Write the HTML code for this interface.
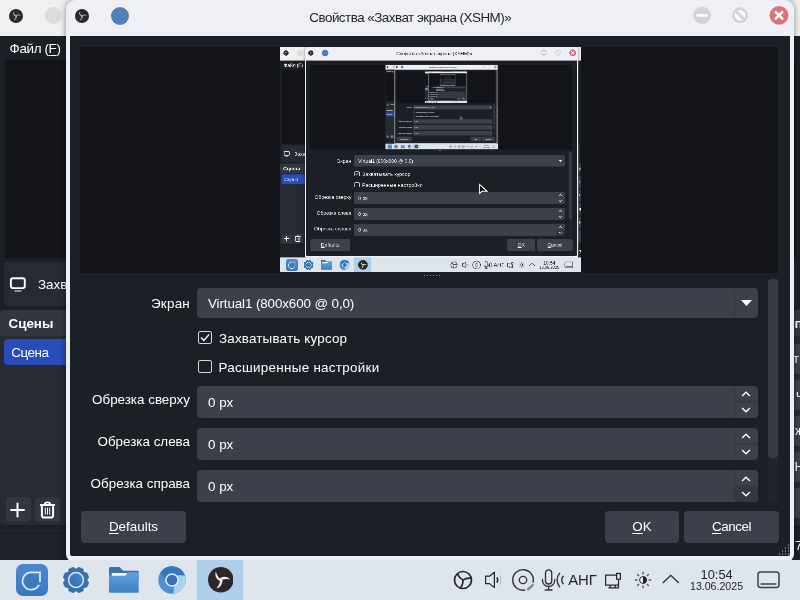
<!DOCTYPE html><html lang="ru"><head><meta charset="utf-8"><title>Свойства «Захват экрана (XSHM)»</title><style>
*{margin:0;padding:0;box-sizing:border-box}
html,body{width:800px;height:600px;overflow:hidden;background:#1d1f26}
body{font-family:"Liberation Sans",sans-serif;font-size:13.4px;color:#fefefe;line-height:16px}
.scr{will-change:transform;position:relative;width:800px;height:600px;overflow:hidden;background:#1d1f26}
.scr div,.scr span,.scr svg{position:absolute}
.scr span{white-space:nowrap}
.scr u{text-decoration:underline;text-underline-offset:2px}
.tb{left:0;top:0;width:800px;height:36px;background:#f0f0f1}
.menu{left:0;top:36px;width:800px;height:24px;background:#1d1f26}
.mprev{left:5px;top:60px;width:790px;height:198px;background:#13141a}
.srcbar{left:3.5px;top:261.7px;width:793px;height:44.3px;background:#272a33;border-radius:4px}
.dock{left:0;top:310px;width:70px;height:215px;background:#272a33;border-radius:4px}
.dockh{left:0;top:0;width:70px;height:26px;background:#32363f;border-radius:4px 4px 0 0}
.sel{left:4px;top:29px;width:66px;height:26px;background:#284cb8;border-radius:4px}
.sbtn{width:25px;height:25.2px;background:#32363f;border-radius:4px}
.status{left:0;top:530px;width:800px;height:30px;background:#1f2129;border-top:1px solid #23262e}
.rstrip{left:794px;top:310px;width:6px;height:215px;background:#272a33}
.dlg{left:66px;top:0;width:728.2px;height:562px;background:#eef0f5;border-radius:9px 9px 8px 8px;box-shadow:0 0 6px rgba(0,0,0,.45)}
.dlgin{left:4px;top:36px;width:720px;height:520px;background:#1d1f26;border-radius:0 0 2px 2px}
.pv{left:10.4px;top:11.2px;width:698px;height:225.6px;background:#13141a}
.pvi{left:199.6px;top:.3px;width:300.7px;height:225.5px;overflow:hidden;background:#1d1f26}
.sc{transform:scale(.3758);transform-origin:0 0;left:0;top:0}
.inp{background:#3c404b;border-radius:4px;height:31.8px;left:126.8px;width:561px}
.lbl{right:600px;text-align:right}
.btn{background:#3c404b;border-radius:4px;height:31.5px;top:475px;text-align:center;line-height:32px}
.cb{left:128px;width:14px;height:13px;border:1px solid #d8d8d8;border-radius:2px}
.task{left:0;top:560px;width:800px;height:40px;background:#dfe5ec}
.tray{color:#232629}
</style></head><body><div class="scr"><div class="tb"></div><svg style="left:9.10px;top:8.80px" width="14.00" height="14.00" viewBox="-12.5 -12.5 25 25"><circle r="12.5" fill="#2d2828"/><g><path d="M1.3,0.5 Q-3.0,-2.2 -5.0,-7.9 Q-6.8,-2.4 -1.0,1.5 Z" transform="rotate(0)" fill="#a8a8a8"/><path d="M1.3,0.5 Q-3.0,-2.2 -5.0,-7.9 Q-6.8,-2.4 -1.0,1.5 Z" transform="rotate(120)" fill="#a8a8a8"/><path d="M1.3,0.5 Q-3.0,-2.2 -5.0,-7.9 Q-6.8,-2.4 -1.0,1.5 Z" transform="rotate(240)" fill="#a8a8a8"/></g></svg><div style="left:44.9px;top:7.3px;width:17px;height:17px;border-radius:50%;background:#dcdcdc"></div><div class="menu"></div><span style="left:9.6px;top:41px;letter-spacing:-.35px">Файл (<u>F</u>)</span><div class="mprev"></div><div class="srcbar"></div><svg style="left:9px;top:276px" width="19" height="17" viewBox="0 0 19 17" ><rect x="1.9" y="2.3" width="13.9" height="9.8" rx="2" fill="none" stroke="#fefefe" stroke-width="1.9"/><path d="M5.4,15 H12.4" stroke="#d0d0d0" stroke-width="1.2"/></svg><span style="left:38px;top:277px">Захват экрана (XSHM)</span><div class="dock"><div class="dockh"></div><span style="left:8.5px;top:5.5px;font-weight:bold">Сцены</span><div class="sel"></div><span style="left:11.2px;top:34.5px;letter-spacing:-.4px">Сцена</span><div class="sbtn" style="left:5.5px;top:186.6px"></div><div class="sbtn" style="left:35px;top:186.6px"></div><svg style="left:5.5px;top:186.6px" width="25" height="25" viewBox="0 0 25 25" ><path d="M11.5,5.8 V20.2 M4.3,13 H18.7" stroke="#fefefe" stroke-width="2"/></svg><svg style="left:35px;top:186.6px" width="25" height="25" viewBox="0 0 25 25" ><path d="M5,8 H20 M9.8,7.4 Q9.8,5.4 12.5,5.4 Q15.2,5.4 15.2,7.4" fill="none" stroke="#fefefe" stroke-width="1.9"/><path d="M6.9,9 V18.2 Q6.9,20.6 9.3,20.6 H15.7 Q18.1,20.6 18.1,18.2 V9" fill="none" stroke="#fefefe" stroke-width="2"/><path d="M10.3,10.6 V17.6 M12.5,10.6 V17.6 M14.7,10.6 V17.6" stroke="#fefefe" stroke-width="1"/></svg></div><div class="status"></div><div class="rstrip"></div><div style="left:794px;top:344.0px;width:6px;height:30px;background:#3c404b"></div><div style="left:794px;top:380.0px;width:6px;height:30px;background:#3c404b"></div><div style="left:794px;top:416.0px;width:6px;height:30px;background:#3c404b"></div><div style="left:794px;top:452.0px;width:6px;height:30px;background:#3c404b"></div><div style="left:794px;top:488.0px;width:6px;height:30px;background:#3c404b"></div><div style="left:794px;top:310px;width:6px;height:26px;background:#32363f"></div><span style="left:794.5px;top:315.5px;font-weight:bold">п</span><span style="left:793px;top:351px">ть</span><span style="left:796px;top:387px">ч</span><span style="left:795px;top:423px">ж</span><span style="left:794.5px;top:459px">На</span><span style="left:795px;top:538px">7</span><div class="dlg"><svg style="left:8.90px;top:8.80px" width="14.00" height="14.00" viewBox="-12.5 -12.5 25 25"><circle r="12.5" fill="#2d2828"/><g><path d="M1.3,0.5 Q-3.0,-2.2 -5.0,-7.9 Q-6.8,-2.4 -1.0,1.5 Z" transform="rotate(0)" fill="#a8a8a8"/><path d="M1.3,0.5 Q-3.0,-2.2 -5.0,-7.9 Q-6.8,-2.4 -1.0,1.5 Z" transform="rotate(120)" fill="#a8a8a8"/><path d="M1.3,0.5 Q-3.0,-2.2 -5.0,-7.9 Q-6.8,-2.4 -1.0,1.5 Z" transform="rotate(240)" fill="#a8a8a8"/></g></svg><div style="left:44.8px;top:6.7px;width:18.2px;height:18.2px;border-radius:50%;background:#4f7fb9"></div><span style="left:243.3px;top:10.2px;color:#232629;font-size:13.4px;letter-spacing:-.5px">Свойства «Захват экрана (XSHM)»</span><svg style="left:627px;top:6px" width="18" height="18" viewBox="0 0 18 18" ><circle cx="9" cy="9.3" r="8.7" fill="#d3d4d5"/><path d="M3.3,9.4 H14.7" stroke="#fff" stroke-width="2.6"/></svg><svg style="left:665px;top:6px" width="18" height="18" viewBox="0 0 18 18" ><circle cx="9" cy="9.3" r="6.7" fill="#fafafa" stroke="#d3d4d5" stroke-width="2.6"/><path d="M4.2,4.6 L13.8,14" stroke="#d3d4d5" stroke-width="2.8"/></svg><svg style="left:702.5px;top:5px" width="20" height="20" viewBox="0 0 20 20" ><circle cx="10" cy="10.3" r="9.4" fill="#da7380"/><path d="M6,6.3 L14,14.3 M14,6.3 L6,14.3" stroke="#fff" stroke-width="2.5"/></svg><div class="dlgin"><div class="pv"><div class="pvi"><div class="scr sc"><div class="tb"></div><svg style="left:9.10px;top:8.80px" width="14.00" height="14.00" viewBox="-12.5 -12.5 25 25"><circle r="12.5" fill="#2d2828"/><g><path d="M1.3,0.5 Q-3.0,-2.2 -5.0,-7.9 Q-6.8,-2.4 -1.0,1.5 Z" transform="rotate(0)" fill="#a8a8a8"/><path d="M1.3,0.5 Q-3.0,-2.2 -5.0,-7.9 Q-6.8,-2.4 -1.0,1.5 Z" transform="rotate(120)" fill="#a8a8a8"/><path d="M1.3,0.5 Q-3.0,-2.2 -5.0,-7.9 Q-6.8,-2.4 -1.0,1.5 Z" transform="rotate(240)" fill="#a8a8a8"/></g></svg><div style="left:44.9px;top:7.3px;width:17px;height:17px;border-radius:50%;background:#dcdcdc"></div><div class="menu"></div><span style="left:9.6px;top:41px;letter-spacing:-.35px">Файл (<u>F</u>)</span><div class="mprev"></div><div class="srcbar"></div><svg style="left:9px;top:276px" width="19" height="17" viewBox="0 0 19 17" ><rect x="1.9" y="2.3" width="13.9" height="9.8" rx="2" fill="none" stroke="#fefefe" stroke-width="1.9"/><path d="M5.4,15 H12.4" stroke="#d0d0d0" stroke-width="1.2"/></svg><span style="left:38px;top:277px">Захват экрана (XSHM)</span><div class="dock"><div class="dockh"></div><span style="left:8.5px;top:5.5px;font-weight:bold">Сцены</span><div class="sel"></div><span style="left:11.2px;top:34.5px;letter-spacing:-.4px">Сцена</span><div class="sbtn" style="left:5.5px;top:186.6px"></div><div class="sbtn" style="left:35px;top:186.6px"></div><svg style="left:5.5px;top:186.6px" width="25" height="25" viewBox="0 0 25 25" ><path d="M11.5,5.8 V20.2 M4.3,13 H18.7" stroke="#fefefe" stroke-width="2"/></svg><svg style="left:35px;top:186.6px" width="25" height="25" viewBox="0 0 25 25" ><path d="M5,8 H20 M9.8,7.4 Q9.8,5.4 12.5,5.4 Q15.2,5.4 15.2,7.4" fill="none" stroke="#fefefe" stroke-width="1.9"/><path d="M6.9,9 V18.2 Q6.9,20.6 9.3,20.6 H15.7 Q18.1,20.6 18.1,18.2 V9" fill="none" stroke="#fefefe" stroke-width="2"/><path d="M10.3,10.6 V17.6 M12.5,10.6 V17.6 M14.7,10.6 V17.6" stroke="#fefefe" stroke-width="1"/></svg></div><div class="status"></div><div class="rstrip"></div><div style="left:794px;top:344.0px;width:6px;height:30px;background:#3c404b"></div><div style="left:794px;top:380.0px;width:6px;height:30px;background:#3c404b"></div><div style="left:794px;top:416.0px;width:6px;height:30px;background:#3c404b"></div><div style="left:794px;top:452.0px;width:6px;height:30px;background:#3c404b"></div><div style="left:794px;top:488.0px;width:6px;height:30px;background:#3c404b"></div><div style="left:794px;top:310px;width:6px;height:26px;background:#32363f"></div><span style="left:794.5px;top:315.5px;font-weight:bold">п</span><span style="left:793px;top:351px">ть</span><span style="left:796px;top:387px">ч</span><span style="left:795px;top:423px">ж</span><span style="left:794.5px;top:459px">На</span><span style="left:795px;top:538px">7</span><div class="dlg"><svg style="left:8.90px;top:8.80px" width="14.00" height="14.00" viewBox="-12.5 -12.5 25 25"><circle r="12.5" fill="#2d2828"/><g><path d="M1.3,0.5 Q-3.0,-2.2 -5.0,-7.9 Q-6.8,-2.4 -1.0,1.5 Z" transform="rotate(0)" fill="#a8a8a8"/><path d="M1.3,0.5 Q-3.0,-2.2 -5.0,-7.9 Q-6.8,-2.4 -1.0,1.5 Z" transform="rotate(120)" fill="#a8a8a8"/><path d="M1.3,0.5 Q-3.0,-2.2 -5.0,-7.9 Q-6.8,-2.4 -1.0,1.5 Z" transform="rotate(240)" fill="#a8a8a8"/></g></svg><div style="left:44.8px;top:6.7px;width:18.2px;height:18.2px;border-radius:50%;background:#4f7fb9"></div><span style="left:243.3px;top:10.2px;color:#232629;font-size:13.4px;letter-spacing:-.5px">Свойства «Захват экрана (XSHM)»</span><svg style="left:627px;top:6px" width="18" height="18" viewBox="0 0 18 18" ><circle cx="9" cy="9.3" r="8.7" fill="#d3d4d5"/><path d="M3.3,9.4 H14.7" stroke="#fff" stroke-width="2.6"/></svg><svg style="left:665px;top:6px" width="18" height="18" viewBox="0 0 18 18" ><circle cx="9" cy="9.3" r="6.7" fill="#fafafa" stroke="#d3d4d5" stroke-width="2.6"/><path d="M4.2,4.6 L13.8,14" stroke="#d3d4d5" stroke-width="2.8"/></svg><svg style="left:702.5px;top:5px" width="20" height="20" viewBox="0 0 20 20" ><circle cx="10" cy="10.3" r="9.4" fill="#da7380"/><path d="M6,6.3 L14,14.3 M14,6.3 L6,14.3" stroke="#fff" stroke-width="2.5"/></svg><div class="dlgin"><div class="pv"><div class="pvi"><div class="scr sc"><div class="tb"></div><svg style="left:9.10px;top:8.80px" width="14.00" height="14.00" viewBox="-12.5 -12.5 25 25"><circle r="12.5" fill="#2d2828"/><g><path d="M1.3,0.5 Q-3.0,-2.2 -5.0,-7.9 Q-6.8,-2.4 -1.0,1.5 Z" transform="rotate(0)" fill="#a8a8a8"/><path d="M1.3,0.5 Q-3.0,-2.2 -5.0,-7.9 Q-6.8,-2.4 -1.0,1.5 Z" transform="rotate(120)" fill="#a8a8a8"/><path d="M1.3,0.5 Q-3.0,-2.2 -5.0,-7.9 Q-6.8,-2.4 -1.0,1.5 Z" transform="rotate(240)" fill="#a8a8a8"/></g></svg><div style="left:44.9px;top:7.3px;width:17px;height:17px;border-radius:50%;background:#dcdcdc"></div><div class="menu"></div><span style="left:9.6px;top:41px;letter-spacing:-.35px">Файл (<u>F</u>)</span><div class="mprev"></div><div class="srcbar"></div><svg style="left:9px;top:276px" width="19" height="17" viewBox="0 0 19 17" ><rect x="1.9" y="2.3" width="13.9" height="9.8" rx="2" fill="none" stroke="#fefefe" stroke-width="1.9"/><path d="M5.4,15 H12.4" stroke="#d0d0d0" stroke-width="1.2"/></svg><span style="left:38px;top:277px">Захват экрана (XSHM)</span><div class="dock"><div class="dockh"></div><span style="left:8.5px;top:5.5px;font-weight:bold">Сцены</span><div class="sel"></div><span style="left:11.2px;top:34.5px;letter-spacing:-.4px">Сцена</span><div class="sbtn" style="left:5.5px;top:186.6px"></div><div class="sbtn" style="left:35px;top:186.6px"></div><svg style="left:5.5px;top:186.6px" width="25" height="25" viewBox="0 0 25 25" ><path d="M11.5,5.8 V20.2 M4.3,13 H18.7" stroke="#fefefe" stroke-width="2"/></svg><svg style="left:35px;top:186.6px" width="25" height="25" viewBox="0 0 25 25" ><path d="M5,8 H20 M9.8,7.4 Q9.8,5.4 12.5,5.4 Q15.2,5.4 15.2,7.4" fill="none" stroke="#fefefe" stroke-width="1.9"/><path d="M6.9,9 V18.2 Q6.9,20.6 9.3,20.6 H15.7 Q18.1,20.6 18.1,18.2 V9" fill="none" stroke="#fefefe" stroke-width="2"/><path d="M10.3,10.6 V17.6 M12.5,10.6 V17.6 M14.7,10.6 V17.6" stroke="#fefefe" stroke-width="1"/></svg></div><div class="status"></div><div class="rstrip"></div><div style="left:794px;top:344.0px;width:6px;height:30px;background:#3c404b"></div><div style="left:794px;top:380.0px;width:6px;height:30px;background:#3c404b"></div><div style="left:794px;top:416.0px;width:6px;height:30px;background:#3c404b"></div><div style="left:794px;top:452.0px;width:6px;height:30px;background:#3c404b"></div><div style="left:794px;top:488.0px;width:6px;height:30px;background:#3c404b"></div><div style="left:794px;top:310px;width:6px;height:26px;background:#32363f"></div><span style="left:794.5px;top:315.5px;font-weight:bold">п</span><span style="left:793px;top:351px">ть</span><span style="left:796px;top:387px">ч</span><span style="left:795px;top:423px">ж</span><span style="left:794.5px;top:459px">На</span><span style="left:795px;top:538px">7</span><div class="dlg"><svg style="left:8.90px;top:8.80px" width="14.00" height="14.00" viewBox="-12.5 -12.5 25 25"><circle r="12.5" fill="#2d2828"/><g><path d="M1.3,0.5 Q-3.0,-2.2 -5.0,-7.9 Q-6.8,-2.4 -1.0,1.5 Z" transform="rotate(0)" fill="#a8a8a8"/><path d="M1.3,0.5 Q-3.0,-2.2 -5.0,-7.9 Q-6.8,-2.4 -1.0,1.5 Z" transform="rotate(120)" fill="#a8a8a8"/><path d="M1.3,0.5 Q-3.0,-2.2 -5.0,-7.9 Q-6.8,-2.4 -1.0,1.5 Z" transform="rotate(240)" fill="#a8a8a8"/></g></svg><div style="left:44.8px;top:6.7px;width:18.2px;height:18.2px;border-radius:50%;background:#4f7fb9"></div><span style="left:243.3px;top:10.2px;color:#232629;font-size:13.4px;letter-spacing:-.5px">Свойства «Захват экрана (XSHM)»</span><svg style="left:627px;top:6px" width="18" height="18" viewBox="0 0 18 18" ><circle cx="9" cy="9.3" r="8.7" fill="#d3d4d5"/><path d="M3.3,9.4 H14.7" stroke="#fff" stroke-width="2.6"/></svg><svg style="left:665px;top:6px" width="18" height="18" viewBox="0 0 18 18" ><circle cx="9" cy="9.3" r="6.7" fill="#fafafa" stroke="#d3d4d5" stroke-width="2.6"/><path d="M4.2,4.6 L13.8,14" stroke="#d3d4d5" stroke-width="2.8"/></svg><svg style="left:702.5px;top:5px" width="20" height="20" viewBox="0 0 20 20" ><circle cx="10" cy="10.3" r="9.4" fill="#da7380"/><path d="M6,6.3 L14,14.3 M14,6.3 L6,14.3" stroke="#fff" stroke-width="2.5"/></svg><div class="dlgin"><div class="pv"><div class="pvi"><div class="scr sc"><div class="tb"></div><svg style="left:9.10px;top:8.80px" width="14.00" height="14.00" viewBox="-12.5 -12.5 25 25"><circle r="12.5" fill="#2d2828"/><g><path d="M1.3,0.5 Q-3.0,-2.2 -5.0,-7.9 Q-6.8,-2.4 -1.0,1.5 Z" transform="rotate(0)" fill="#a8a8a8"/><path d="M1.3,0.5 Q-3.0,-2.2 -5.0,-7.9 Q-6.8,-2.4 -1.0,1.5 Z" transform="rotate(120)" fill="#a8a8a8"/><path d="M1.3,0.5 Q-3.0,-2.2 -5.0,-7.9 Q-6.8,-2.4 -1.0,1.5 Z" transform="rotate(240)" fill="#a8a8a8"/></g></svg><div style="left:44.9px;top:7.3px;width:17px;height:17px;border-radius:50%;background:#dcdcdc"></div><div class="menu"></div><span style="left:9.6px;top:41px;letter-spacing:-.35px">Файл (<u>F</u>)</span><div class="mprev"></div><div class="srcbar"></div><svg style="left:9px;top:276px" width="19" height="17" viewBox="0 0 19 17" ><rect x="1.9" y="2.3" width="13.9" height="9.8" rx="2" fill="none" stroke="#fefefe" stroke-width="1.9"/><path d="M5.4,15 H12.4" stroke="#d0d0d0" stroke-width="1.2"/></svg><span style="left:38px;top:277px">Захват экрана (XSHM)</span><div class="dock"><div class="dockh"></div><span style="left:8.5px;top:5.5px;font-weight:bold">Сцены</span><div class="sel"></div><span style="left:11.2px;top:34.5px;letter-spacing:-.4px">Сцена</span><div class="sbtn" style="left:5.5px;top:186.6px"></div><div class="sbtn" style="left:35px;top:186.6px"></div><svg style="left:5.5px;top:186.6px" width="25" height="25" viewBox="0 0 25 25" ><path d="M11.5,5.8 V20.2 M4.3,13 H18.7" stroke="#fefefe" stroke-width="2"/></svg><svg style="left:35px;top:186.6px" width="25" height="25" viewBox="0 0 25 25" ><path d="M5,8 H20 M9.8,7.4 Q9.8,5.4 12.5,5.4 Q15.2,5.4 15.2,7.4" fill="none" stroke="#fefefe" stroke-width="1.9"/><path d="M6.9,9 V18.2 Q6.9,20.6 9.3,20.6 H15.7 Q18.1,20.6 18.1,18.2 V9" fill="none" stroke="#fefefe" stroke-width="2"/><path d="M10.3,10.6 V17.6 M12.5,10.6 V17.6 M14.7,10.6 V17.6" stroke="#fefefe" stroke-width="1"/></svg></div><div class="status"></div><div class="rstrip"></div><div style="left:794px;top:344.0px;width:6px;height:30px;background:#3c404b"></div><div style="left:794px;top:380.0px;width:6px;height:30px;background:#3c404b"></div><div style="left:794px;top:416.0px;width:6px;height:30px;background:#3c404b"></div><div style="left:794px;top:452.0px;width:6px;height:30px;background:#3c404b"></div><div style="left:794px;top:488.0px;width:6px;height:30px;background:#3c404b"></div><div style="left:794px;top:310px;width:6px;height:26px;background:#32363f"></div><span style="left:794.5px;top:315.5px;font-weight:bold">п</span><span style="left:793px;top:351px">ть</span><span style="left:796px;top:387px">ч</span><span style="left:795px;top:423px">ж</span><span style="left:794.5px;top:459px">На</span><span style="left:795px;top:538px">7</span><div class="dlg"><svg style="left:8.90px;top:8.80px" width="14.00" height="14.00" viewBox="-12.5 -12.5 25 25"><circle r="12.5" fill="#2d2828"/><g><path d="M1.3,0.5 Q-3.0,-2.2 -5.0,-7.9 Q-6.8,-2.4 -1.0,1.5 Z" transform="rotate(0)" fill="#a8a8a8"/><path d="M1.3,0.5 Q-3.0,-2.2 -5.0,-7.9 Q-6.8,-2.4 -1.0,1.5 Z" transform="rotate(120)" fill="#a8a8a8"/><path d="M1.3,0.5 Q-3.0,-2.2 -5.0,-7.9 Q-6.8,-2.4 -1.0,1.5 Z" transform="rotate(240)" fill="#a8a8a8"/></g></svg><div style="left:44.8px;top:6.7px;width:18.2px;height:18.2px;border-radius:50%;background:#4f7fb9"></div><span style="left:243.3px;top:10.2px;color:#232629;font-size:13.4px;letter-spacing:-.5px">Свойства «Захват экрана (XSHM)»</span><svg style="left:627px;top:6px" width="18" height="18" viewBox="0 0 18 18" ><circle cx="9" cy="9.3" r="8.7" fill="#d3d4d5"/><path d="M3.3,9.4 H14.7" stroke="#fff" stroke-width="2.6"/></svg><svg style="left:665px;top:6px" width="18" height="18" viewBox="0 0 18 18" ><circle cx="9" cy="9.3" r="6.7" fill="#fafafa" stroke="#d3d4d5" stroke-width="2.6"/><path d="M4.2,4.6 L13.8,14" stroke="#d3d4d5" stroke-width="2.8"/></svg><svg style="left:702.5px;top:5px" width="20" height="20" viewBox="0 0 20 20" ><circle cx="10" cy="10.3" r="9.4" fill="#da7380"/><path d="M6,6.3 L14,14.3 M14,6.3 L6,14.3" stroke="#fff" stroke-width="2.5"/></svg><div class="dlgin"><div class="pv"><div class="pvi"><div class="scr sc"><div class="tb"></div><svg style="left:9.10px;top:8.80px" width="14.00" height="14.00" viewBox="-12.5 -12.5 25 25"><circle r="12.5" fill="#2d2828"/><g><path d="M1.3,0.5 Q-3.0,-2.2 -5.0,-7.9 Q-6.8,-2.4 -1.0,1.5 Z" transform="rotate(0)" fill="#a8a8a8"/><path d="M1.3,0.5 Q-3.0,-2.2 -5.0,-7.9 Q-6.8,-2.4 -1.0,1.5 Z" transform="rotate(120)" fill="#a8a8a8"/><path d="M1.3,0.5 Q-3.0,-2.2 -5.0,-7.9 Q-6.8,-2.4 -1.0,1.5 Z" transform="rotate(240)" fill="#a8a8a8"/></g></svg><div style="left:44.9px;top:7.3px;width:17px;height:17px;border-radius:50%;background:#dcdcdc"></div><div class="menu"></div><span style="left:9.6px;top:41px;letter-spacing:-.35px">Файл (<u>F</u>)</span><div class="mprev"></div><div class="srcbar"></div><svg style="left:9px;top:276px" width="19" height="17" viewBox="0 0 19 17" ><rect x="1.9" y="2.3" width="13.9" height="9.8" rx="2" fill="none" stroke="#fefefe" stroke-width="1.9"/><path d="M5.4,15 H12.4" stroke="#d0d0d0" stroke-width="1.2"/></svg><span style="left:38px;top:277px">Захват экрана (XSHM)</span><div class="dock"><div class="dockh"></div><span style="left:8.5px;top:5.5px;font-weight:bold">Сцены</span><div class="sel"></div><span style="left:11.2px;top:34.5px;letter-spacing:-.4px">Сцена</span><div class="sbtn" style="left:5.5px;top:186.6px"></div><div class="sbtn" style="left:35px;top:186.6px"></div><svg style="left:5.5px;top:186.6px" width="25" height="25" viewBox="0 0 25 25" ><path d="M11.5,5.8 V20.2 M4.3,13 H18.7" stroke="#fefefe" stroke-width="2"/></svg><svg style="left:35px;top:186.6px" width="25" height="25" viewBox="0 0 25 25" ><path d="M5,8 H20 M9.8,7.4 Q9.8,5.4 12.5,5.4 Q15.2,5.4 15.2,7.4" fill="none" stroke="#fefefe" stroke-width="1.9"/><path d="M6.9,9 V18.2 Q6.9,20.6 9.3,20.6 H15.7 Q18.1,20.6 18.1,18.2 V9" fill="none" stroke="#fefefe" stroke-width="2"/><path d="M10.3,10.6 V17.6 M12.5,10.6 V17.6 M14.7,10.6 V17.6" stroke="#fefefe" stroke-width="1"/></svg></div><div class="status"></div><div class="rstrip"></div><div style="left:794px;top:344.0px;width:6px;height:30px;background:#3c404b"></div><div style="left:794px;top:380.0px;width:6px;height:30px;background:#3c404b"></div><div style="left:794px;top:416.0px;width:6px;height:30px;background:#3c404b"></div><div style="left:794px;top:452.0px;width:6px;height:30px;background:#3c404b"></div><div style="left:794px;top:488.0px;width:6px;height:30px;background:#3c404b"></div><div style="left:794px;top:310px;width:6px;height:26px;background:#32363f"></div><span style="left:794.5px;top:315.5px;font-weight:bold">п</span><span style="left:793px;top:351px">ть</span><span style="left:796px;top:387px">ч</span><span style="left:795px;top:423px">ж</span><span style="left:794.5px;top:459px">На</span><span style="left:795px;top:538px">7</span><div class="dlg"><svg style="left:8.90px;top:8.80px" width="14.00" height="14.00" viewBox="-12.5 -12.5 25 25"><circle r="12.5" fill="#2d2828"/><g><path d="M1.3,0.5 Q-3.0,-2.2 -5.0,-7.9 Q-6.8,-2.4 -1.0,1.5 Z" transform="rotate(0)" fill="#a8a8a8"/><path d="M1.3,0.5 Q-3.0,-2.2 -5.0,-7.9 Q-6.8,-2.4 -1.0,1.5 Z" transform="rotate(120)" fill="#a8a8a8"/><path d="M1.3,0.5 Q-3.0,-2.2 -5.0,-7.9 Q-6.8,-2.4 -1.0,1.5 Z" transform="rotate(240)" fill="#a8a8a8"/></g></svg><div style="left:44.8px;top:6.7px;width:18.2px;height:18.2px;border-radius:50%;background:#4f7fb9"></div><span style="left:243.3px;top:10.2px;color:#232629;font-size:13.4px;letter-spacing:-.5px">Свойства «Захват экрана (XSHM)»</span><svg style="left:627px;top:6px" width="18" height="18" viewBox="0 0 18 18" ><circle cx="9" cy="9.3" r="8.7" fill="#d3d4d5"/><path d="M3.3,9.4 H14.7" stroke="#fff" stroke-width="2.6"/></svg><svg style="left:665px;top:6px" width="18" height="18" viewBox="0 0 18 18" ><circle cx="9" cy="9.3" r="6.7" fill="#fafafa" stroke="#d3d4d5" stroke-width="2.6"/><path d="M4.2,4.6 L13.8,14" stroke="#d3d4d5" stroke-width="2.8"/></svg><svg style="left:702.5px;top:5px" width="20" height="20" viewBox="0 0 20 20" ><circle cx="10" cy="10.3" r="9.4" fill="#da7380"/><path d="M6,6.3 L14,14.3 M14,6.3 L6,14.3" stroke="#fff" stroke-width="2.5"/></svg><div class="dlgin"><div class="pv"><div class="pvi"></div></div><div style="left:354px;top:238.5px;width:1.4px;height:1.4px;background:#8a8e98"></div><div style="left:357px;top:238.5px;width:1.4px;height:1.4px;background:#8a8e98"></div><div style="left:360px;top:238.5px;width:1.4px;height:1.4px;background:#8a8e98"></div><div style="left:363px;top:238.5px;width:1.4px;height:1.4px;background:#8a8e98"></div><div style="left:366px;top:238.5px;width:1.4px;height:1.4px;background:#8a8e98"></div><div style="left:369px;top:238.5px;width:1.4px;height:1.4px;background:#8a8e98"></div><div style="left:698px;top:243px;width:10px;height:223.5px;background:#22252d;border-radius:4px"></div><div style="left:698px;top:243px;width:10px;height:178.5px;background:#373b46;border-radius:4px"></div><span class="lbl" style="top:259.5px;letter-spacing:.25px">Экран</span><div class="inp" style="top:252px;height:30px"></div><span style="left:138px;top:259.5px;letter-spacing:-.11px">Virtual1 (800x600 @ 0,0)</span><div style="left:663.5px;top:253px;width:1px;height:28px;background:#32363f"></div><svg style="left:671px;top:264.3px" width="11" height="6" viewBox="0 0 11 6" ><path d="M0,0 H11 L5.5,6 Z" fill="#fefefe"/></svg><div class="cb" style="top:295px"></div><svg style="left:128px;top:295px" width="14" height="13" viewBox="0 0 14 13" ><path d="M3,6.6 L5.8,9.4 L11.2,3.4" fill="none" stroke="#fefefe" stroke-width="1.4"/></svg><span style="left:149px;top:294.7px;letter-spacing:.19px">Захватывать курсор</span><div class="cb" style="top:324px"></div><span style="left:148.5px;top:323.7px;letter-spacing:.3px">Расширенные настройки</span><span class="lbl" style="top:355.9px">Обрезка сверху</span><div class="inp" style="top:349.9px"></div><span style="left:138px;top:358.7px">0 px</span><div style="left:663.5px;top:350.9px;width:1px;height:29.8px;background:#32363f"></div><div style="left:664.5px;top:365.3px;width:23px;height:1px;background:#32363f"></div><svg style="left:671px;top:355.3px" width="10" height="6" viewBox="0 0 10 6" ><path d="M1.1,4.9 L5,1.2 L8.9,4.9" fill="none" stroke="#fefefe" stroke-width="1.4"/></svg><svg style="left:671px;top:370.8px" width="10" height="6" viewBox="0 0 10 6" ><path d="M1.1,1.1 L5,4.8 L8.9,1.1" fill="none" stroke="#fefefe" stroke-width="1.4"/></svg><span class="lbl" style="top:398.0px">Обрезка слева</span><div class="inp" style="top:392.0px"></div><span style="left:138px;top:400.8px">0 px</span><div style="left:663.5px;top:393.0px;width:1px;height:29.8px;background:#32363f"></div><div style="left:664.5px;top:407.4px;width:23px;height:1px;background:#32363f"></div><svg style="left:671px;top:397.4px" width="10" height="6" viewBox="0 0 10 6" ><path d="M1.1,4.9 L5,1.2 L8.9,4.9" fill="none" stroke="#fefefe" stroke-width="1.4"/></svg><svg style="left:671px;top:412.9px" width="10" height="6" viewBox="0 0 10 6" ><path d="M1.1,1.1 L5,4.8 L8.9,1.1" fill="none" stroke="#fefefe" stroke-width="1.4"/></svg><span class="lbl" style="top:440.1px">Обрезка справа</span><div class="inp" style="top:434.1px"></div><span style="left:138px;top:442.9px">0 px</span><div style="left:663.5px;top:435.1px;width:1px;height:29.8px;background:#32363f"></div><div style="left:664.5px;top:449.5px;width:23px;height:1px;background:#32363f"></div><div style="left:664.5px;top:450.5px;width:23.3px;height:15.4px;background:#343842;border-radius:0 0 4px 0"></div><svg style="left:671px;top:439.5px" width="10" height="6" viewBox="0 0 10 6" ><path d="M1.1,4.9 L5,1.2 L8.9,4.9" fill="none" stroke="#fefefe" stroke-width="1.4"/></svg><svg style="left:671px;top:455.0px" width="10" height="6" viewBox="0 0 10 6" ><path d="M1.1,1.1 L5,4.8 L8.9,1.1" fill="none" stroke="#fefefe" stroke-width="1.4"/></svg><div class="btn" style="left:11px;width:105px"><u>D</u>efaults</div><div class="btn" style="left:535px;width:74px"><u>O</u>K</div><div class="btn" style="left:614px;width:95px"><span style="position:static;letter-spacing:-.45px"><u>C</u>ancel</span></div><div style="left:717.5px;top:508px;width:1.6px;height:1.6px;background:#6f7480"></div><div style="left:714.5px;top:511px;width:1.6px;height:1.6px;background:#6f7480"></div><div style="left:717.5px;top:511px;width:1.6px;height:1.6px;background:#6f7480"></div><div style="left:711.5px;top:514px;width:1.6px;height:1.6px;background:#6f7480"></div><div style="left:714.5px;top:514px;width:1.6px;height:1.6px;background:#6f7480"></div><div style="left:717.5px;top:514px;width:1.6px;height:1.6px;background:#6f7480"></div><div style="left:708.5px;top:517px;width:1.6px;height:1.6px;background:#6f7480"></div><div style="left:711.5px;top:517px;width:1.6px;height:1.6px;background:#6f7480"></div><div style="left:714.5px;top:517px;width:1.6px;height:1.6px;background:#6f7480"></div><div style="left:717.5px;top:517px;width:1.6px;height:1.6px;background:#6f7480"></div></div></div><div class="task"></div><div style="left:197px;top:560px;width:46px;height:40px;background:#afceea"></div><div style="left:194.5px;top:560px;width:2.5px;height:40px;background:#d6e6f2"></div><div style="left:243px;top:560px;width:3px;height:40px;background:#d6e6f2"></div><svg style="left:16px;top:564px" width="32" height="32" viewBox="0 0 32 32" ><defs><linearGradient id="gA" x1="0" y1="0" x2="0" y2="1"><stop offset="0" stop-color="#4c89cf"/><stop offset="1" stop-color="#3c78c0"/></linearGradient></defs><rect x="0" y="0" width="32" height="32" rx="7" fill="url(#gA)"/><circle cx="15.3" cy="16.7" r="6.6" fill="#3a73b8" opacity=".5"/><path d="M23,20.9 A8.7,8.7 0 1 1 14.2,8.3 H24 V18" fill="none" stroke="#dbeeff" stroke-width="1.7" stroke-linejoin="miter"/></svg><svg style="left:60px;top:563.7px" width="32" height="32" viewBox="-16 -16 32 32"><defs><linearGradient id="gG" x1="1" y1="0" x2="0" y2="1"><stop offset="0" stop-color="#3f8ae0"/><stop offset="1" stop-color="#3a68a4"/></linearGradient></defs><circle r="13.2" fill="#3d70a8"/><circle cx="13.60" cy="0.00" r="2.1" fill="#e3eef9"/><circle cx="9.62" cy="9.62" r="2.1" fill="#e3eef9"/><circle cx="0.00" cy="13.60" r="2.1" fill="#e3eef9"/><circle cx="-9.62" cy="9.62" r="2.1" fill="#e3eef9"/><circle cx="-13.60" cy="0.00" r="2.1" fill="#e3eef9"/><circle cx="-9.62" cy="-9.62" r="2.1" fill="#e3eef9"/><circle cx="-0.00" cy="-13.60" r="2.1" fill="#e3eef9"/><circle cx="9.62" cy="-9.62" r="2.1" fill="#e3eef9"/><circle r="7.4" fill="url(#gG)" stroke="#d4ecff" stroke-width="1.5"/></svg><svg style="left:109px;top:567px" width="30" height="26" viewBox="0 0 30 26" ><defs><linearGradient id="gF" x1="0" y1="0" x2="0" y2="1"><stop offset="0" stop-color="#62a1dc"/><stop offset="1" stop-color="#3f80c4"/></linearGradient></defs><path d="M0,1.2 Q0,0 1.2,0 H10.6 L14.4,3.8 H28.6 Q29.7,3.8 29.7,5 V12 H0 Z" fill="#3c72ad"/><rect x="2.7" y="6" width="16" height="3.4" fill="#f4f8fc"/><path d="M0,8.7 H16.2 L18.8,5.3 H29.7 V24.5 Q29.7,25.7 28.5,25.7 H1.2 Q0,25.7 0,24.5 Z" fill="url(#gF)"/></svg><svg style="left:156px;top:563.7px" width="32" height="32" viewBox="-16 -16 32 32"><defs><linearGradient id="gC" x1="0" y1="0" x2="1" y2="1"><stop offset="0" stop-color="#8cc3ea"/><stop offset="1" stop-color="#bfe2f3"/></linearGradient></defs><circle r="13.7" fill="#4f8ed0"/><path d="M-2,1 Q-9,-4 -11.86,-6.85 A13.7,13.7 0 0 1 13.03,-4.23 L5.5,-5 Z" fill="#3777bb"/><path d="M5.5,-5 L13.03,-4.23 A13.7,13.7 0 0 1 1.43,13.62 L2,6 Z" fill="url(#gC)"/><circle r="6.1" fill="#3a72b4" stroke="#dcf0ff" stroke-width="1.5"/></svg><svg style="left:207.50px;top:567.10px" width="25.60" height="25.60" viewBox="-12.5 -12.5 25 25"><circle r="12.5" fill="#2d2828"/><g><path d="M1.3,0.5 Q-3.0,-2.2 -5.0,-7.9 Q-6.8,-2.4 -1.0,1.5 Z" transform="rotate(0)" fill="#ececec"/><path d="M1.3,0.5 Q-3.0,-2.2 -5.0,-7.9 Q-6.8,-2.4 -1.0,1.5 Z" transform="rotate(120)" fill="#ececec"/><path d="M1.3,0.5 Q-3.0,-2.2 -5.0,-7.9 Q-6.8,-2.4 -1.0,1.5 Z" transform="rotate(240)" fill="#ececec"/></g></svg><svg style="left:453px;top:569.6px" width="20" height="20" viewBox="-10 -10 20 20"><g fill="none" stroke="#232629" stroke-width="1.6" stroke-linecap="butt"><circle r="8.5" stroke-width="1.7"/><path d="M0.2,0.1 Q-3.9,-1.9 -5.6,-6.1" transform="rotate(0)"/><path d="M0.2,0.1 Q-3.9,-1.9 -5.6,-6.1" transform="rotate(120)"/><path d="M0.2,0.1 Q-3.9,-1.9 -5.6,-6.1" transform="rotate(240)"/></g></svg><svg style="left:484px;top:570px" width="20" height="20" viewBox="0 0 20 20" ><g fill="none" stroke="#232629" stroke-width="1.2" stroke-linejoin="round"><path d="M1.6,6.2 H5.6 L10.4,2.2 V17.6 L5.6,13.6 H1.6 Z"/><path d="M12.9,7.3 Q14.6,10 12.9,12.7" stroke-width="1.5"/><path d="M15.6,5.2 Q18.6,10 15.6,14.8" stroke="#b9bec4" stroke-width="1.1"/></g></svg><svg style="left:511px;top:568px" width="24" height="24" viewBox="0 0 24 24" ><g fill="none" stroke="#2f3338" stroke-width="1.4" stroke-linecap="round"><path d="M22.1,14.2 A10.3,10.3 0 1 0 13.8,22.1"/><circle cx="12" cy="12" r="3.7" stroke-width="1.3"/><path d="M17.2,21.3 L21.6,17.2" stroke="#8a8f96" stroke-width="2.6"/></g></svg><svg style="left:540px;top:568px" width="26" height="24" viewBox="0 0 26 24" ><g fill="none" stroke="#2f3338" stroke-width="1.3" stroke-linecap="round"><rect x="5.5" y="1.8" width="6.2" height="14.2" rx="3.1"/><path d="M2.5,11.4 V12.4 A6.1,6.1 0 0 0 14.7,12.4 V11.4"/><path d="M8.6,18.6 V22 M5.2,22 H12"/><path d="M19.6,5.2 Q14.6,12 19.6,18.8" stroke-width="1.4"/><path d="M23.2,8.2 Q20.2,12 23.2,15.8" stroke-width="1.4"/></g></svg><span class="tray" style="left:568.2px;top:571.5px;font-size:14.9px;line-height:16px">АНГ</span><svg style="left:603px;top:571px" width="20" height="20" viewBox="0 0 20 20" ><g fill="none" stroke="#232629" stroke-width="1.2"><path d="M13.4,4.2 H2.6 V14.2 H15"/><path d="M5.4,16.8 H15 M7.2,14.2 V16.8 M12.2,14.2 V16.8"/><rect x="13.6" y="2.4" width="3.8" height="5.8" fill="#dfe5ec"/><path d="M15.5,8.2 V17.4"/></g></svg><svg style="left:631px;top:567.8px" width="24" height="24" viewBox="0 0 24 24" ><path d="M17.60,12.00 L20.20,12.00 M15.96,15.96 L17.80,17.80 M12.00,17.60 L12.00,20.20 M8.04,15.96 L6.20,17.80 M6.40,12.00 L3.80,12.00 M8.04,8.04 L6.20,6.20 M12.00,6.40 L12.00,3.80 M15.96,8.04 L17.80,6.20 " stroke="#555a60" stroke-width="1.3" fill="none"/><circle cx="12" cy="12" r="3.4" fill="#fff" stroke="#232629" stroke-width="1"/><path d="M12,8.2 A3.8,3.8 0 0 1 12,15.8 Z" fill="#232629"/></svg><svg style="left:662.4px;top:573.8px" width="18" height="11" viewBox="0 0 18 11" ><path d="M0.8,9 L8.8,1.4 L16.8,9" fill="none" stroke="#232629" stroke-width="1.2"/></svg><span class="tray" style="left:700.6px;top:567px;font-size:12.8px;line-height:15px">10:54</span><span class="tray" style="left:690px;top:579.6px;font-size:10.6px;line-height:13px">13.06.2025</span><svg style="left:756.5px;top:571.2px" width="23" height="18" viewBox="0 0 23 18" ><rect x="1" y="1" width="21" height="15.4" rx="2.6" fill="none" stroke="#3b4046" stroke-width="1.5"/><path d="M3.6,13 H19.4" stroke="#3b4046" stroke-width="1.5"/></svg><svg style="left:528px;top:362px" width="28" height="32" viewBox="0 0 28 32" ><path d="M3.5,4 V27.5 L9.5,21.5 H22.5 Z" fill="#0a0a0a" stroke="#fff" stroke-width="2.6" stroke-linejoin="miter"/></svg></div></div></div><div style="left:354px;top:238.5px;width:1.4px;height:1.4px;background:#8a8e98"></div><div style="left:357px;top:238.5px;width:1.4px;height:1.4px;background:#8a8e98"></div><div style="left:360px;top:238.5px;width:1.4px;height:1.4px;background:#8a8e98"></div><div style="left:363px;top:238.5px;width:1.4px;height:1.4px;background:#8a8e98"></div><div style="left:366px;top:238.5px;width:1.4px;height:1.4px;background:#8a8e98"></div><div style="left:369px;top:238.5px;width:1.4px;height:1.4px;background:#8a8e98"></div><div style="left:698px;top:243px;width:10px;height:223.5px;background:#22252d;border-radius:4px"></div><div style="left:698px;top:243px;width:10px;height:178.5px;background:#373b46;border-radius:4px"></div><span class="lbl" style="top:259.5px;letter-spacing:.25px">Экран</span><div class="inp" style="top:252px;height:30px"></div><span style="left:138px;top:259.5px;letter-spacing:-.11px">Virtual1 (800x600 @ 0,0)</span><div style="left:663.5px;top:253px;width:1px;height:28px;background:#32363f"></div><svg style="left:671px;top:264.3px" width="11" height="6" viewBox="0 0 11 6" ><path d="M0,0 H11 L5.5,6 Z" fill="#fefefe"/></svg><div class="cb" style="top:295px"></div><svg style="left:128px;top:295px" width="14" height="13" viewBox="0 0 14 13" ><path d="M3,6.6 L5.8,9.4 L11.2,3.4" fill="none" stroke="#fefefe" stroke-width="1.4"/></svg><span style="left:149px;top:294.7px;letter-spacing:.19px">Захватывать курсор</span><div class="cb" style="top:324px"></div><span style="left:148.5px;top:323.7px;letter-spacing:.3px">Расширенные настройки</span><span class="lbl" style="top:355.9px">Обрезка сверху</span><div class="inp" style="top:349.9px"></div><span style="left:138px;top:358.7px">0 px</span><div style="left:663.5px;top:350.9px;width:1px;height:29.8px;background:#32363f"></div><div style="left:664.5px;top:365.3px;width:23px;height:1px;background:#32363f"></div><svg style="left:671px;top:355.3px" width="10" height="6" viewBox="0 0 10 6" ><path d="M1.1,4.9 L5,1.2 L8.9,4.9" fill="none" stroke="#fefefe" stroke-width="1.4"/></svg><svg style="left:671px;top:370.8px" width="10" height="6" viewBox="0 0 10 6" ><path d="M1.1,1.1 L5,4.8 L8.9,1.1" fill="none" stroke="#fefefe" stroke-width="1.4"/></svg><span class="lbl" style="top:398.0px">Обрезка слева</span><div class="inp" style="top:392.0px"></div><span style="left:138px;top:400.8px">0 px</span><div style="left:663.5px;top:393.0px;width:1px;height:29.8px;background:#32363f"></div><div style="left:664.5px;top:407.4px;width:23px;height:1px;background:#32363f"></div><svg style="left:671px;top:397.4px" width="10" height="6" viewBox="0 0 10 6" ><path d="M1.1,4.9 L5,1.2 L8.9,4.9" fill="none" stroke="#fefefe" stroke-width="1.4"/></svg><svg style="left:671px;top:412.9px" width="10" height="6" viewBox="0 0 10 6" ><path d="M1.1,1.1 L5,4.8 L8.9,1.1" fill="none" stroke="#fefefe" stroke-width="1.4"/></svg><span class="lbl" style="top:440.1px">Обрезка справа</span><div class="inp" style="top:434.1px"></div><span style="left:138px;top:442.9px">0 px</span><div style="left:663.5px;top:435.1px;width:1px;height:29.8px;background:#32363f"></div><div style="left:664.5px;top:449.5px;width:23px;height:1px;background:#32363f"></div><div style="left:664.5px;top:450.5px;width:23.3px;height:15.4px;background:#343842;border-radius:0 0 4px 0"></div><svg style="left:671px;top:439.5px" width="10" height="6" viewBox="0 0 10 6" ><path d="M1.1,4.9 L5,1.2 L8.9,4.9" fill="none" stroke="#fefefe" stroke-width="1.4"/></svg><svg style="left:671px;top:455.0px" width="10" height="6" viewBox="0 0 10 6" ><path d="M1.1,1.1 L5,4.8 L8.9,1.1" fill="none" stroke="#fefefe" stroke-width="1.4"/></svg><div class="btn" style="left:11px;width:105px"><u>D</u>efaults</div><div class="btn" style="left:535px;width:74px"><u>O</u>K</div><div class="btn" style="left:614px;width:95px"><span style="position:static;letter-spacing:-.45px"><u>C</u>ancel</span></div><div style="left:717.5px;top:508px;width:1.6px;height:1.6px;background:#6f7480"></div><div style="left:714.5px;top:511px;width:1.6px;height:1.6px;background:#6f7480"></div><div style="left:717.5px;top:511px;width:1.6px;height:1.6px;background:#6f7480"></div><div style="left:711.5px;top:514px;width:1.6px;height:1.6px;background:#6f7480"></div><div style="left:714.5px;top:514px;width:1.6px;height:1.6px;background:#6f7480"></div><div style="left:717.5px;top:514px;width:1.6px;height:1.6px;background:#6f7480"></div><div style="left:708.5px;top:517px;width:1.6px;height:1.6px;background:#6f7480"></div><div style="left:711.5px;top:517px;width:1.6px;height:1.6px;background:#6f7480"></div><div style="left:714.5px;top:517px;width:1.6px;height:1.6px;background:#6f7480"></div><div style="left:717.5px;top:517px;width:1.6px;height:1.6px;background:#6f7480"></div></div></div><div class="task"></div><div style="left:197px;top:560px;width:46px;height:40px;background:#afceea"></div><div style="left:194.5px;top:560px;width:2.5px;height:40px;background:#d6e6f2"></div><div style="left:243px;top:560px;width:3px;height:40px;background:#d6e6f2"></div><svg style="left:16px;top:564px" width="32" height="32" viewBox="0 0 32 32" ><defs><linearGradient id="gA" x1="0" y1="0" x2="0" y2="1"><stop offset="0" stop-color="#4c89cf"/><stop offset="1" stop-color="#3c78c0"/></linearGradient></defs><rect x="0" y="0" width="32" height="32" rx="7" fill="url(#gA)"/><circle cx="15.3" cy="16.7" r="6.6" fill="#3a73b8" opacity=".5"/><path d="M23,20.9 A8.7,8.7 0 1 1 14.2,8.3 H24 V18" fill="none" stroke="#dbeeff" stroke-width="1.7" stroke-linejoin="miter"/></svg><svg style="left:60px;top:563.7px" width="32" height="32" viewBox="-16 -16 32 32"><defs><linearGradient id="gG" x1="1" y1="0" x2="0" y2="1"><stop offset="0" stop-color="#3f8ae0"/><stop offset="1" stop-color="#3a68a4"/></linearGradient></defs><circle r="13.2" fill="#3d70a8"/><circle cx="13.60" cy="0.00" r="2.1" fill="#e3eef9"/><circle cx="9.62" cy="9.62" r="2.1" fill="#e3eef9"/><circle cx="0.00" cy="13.60" r="2.1" fill="#e3eef9"/><circle cx="-9.62" cy="9.62" r="2.1" fill="#e3eef9"/><circle cx="-13.60" cy="0.00" r="2.1" fill="#e3eef9"/><circle cx="-9.62" cy="-9.62" r="2.1" fill="#e3eef9"/><circle cx="-0.00" cy="-13.60" r="2.1" fill="#e3eef9"/><circle cx="9.62" cy="-9.62" r="2.1" fill="#e3eef9"/><circle r="7.4" fill="url(#gG)" stroke="#d4ecff" stroke-width="1.5"/></svg><svg style="left:109px;top:567px" width="30" height="26" viewBox="0 0 30 26" ><defs><linearGradient id="gF" x1="0" y1="0" x2="0" y2="1"><stop offset="0" stop-color="#62a1dc"/><stop offset="1" stop-color="#3f80c4"/></linearGradient></defs><path d="M0,1.2 Q0,0 1.2,0 H10.6 L14.4,3.8 H28.6 Q29.7,3.8 29.7,5 V12 H0 Z" fill="#3c72ad"/><rect x="2.7" y="6" width="16" height="3.4" fill="#f4f8fc"/><path d="M0,8.7 H16.2 L18.8,5.3 H29.7 V24.5 Q29.7,25.7 28.5,25.7 H1.2 Q0,25.7 0,24.5 Z" fill="url(#gF)"/></svg><svg style="left:156px;top:563.7px" width="32" height="32" viewBox="-16 -16 32 32"><defs><linearGradient id="gC" x1="0" y1="0" x2="1" y2="1"><stop offset="0" stop-color="#8cc3ea"/><stop offset="1" stop-color="#bfe2f3"/></linearGradient></defs><circle r="13.7" fill="#4f8ed0"/><path d="M-2,1 Q-9,-4 -11.86,-6.85 A13.7,13.7 0 0 1 13.03,-4.23 L5.5,-5 Z" fill="#3777bb"/><path d="M5.5,-5 L13.03,-4.23 A13.7,13.7 0 0 1 1.43,13.62 L2,6 Z" fill="url(#gC)"/><circle r="6.1" fill="#3a72b4" stroke="#dcf0ff" stroke-width="1.5"/></svg><svg style="left:207.50px;top:567.10px" width="25.60" height="25.60" viewBox="-12.5 -12.5 25 25"><circle r="12.5" fill="#2d2828"/><g><path d="M1.3,0.5 Q-3.0,-2.2 -5.0,-7.9 Q-6.8,-2.4 -1.0,1.5 Z" transform="rotate(0)" fill="#ececec"/><path d="M1.3,0.5 Q-3.0,-2.2 -5.0,-7.9 Q-6.8,-2.4 -1.0,1.5 Z" transform="rotate(120)" fill="#ececec"/><path d="M1.3,0.5 Q-3.0,-2.2 -5.0,-7.9 Q-6.8,-2.4 -1.0,1.5 Z" transform="rotate(240)" fill="#ececec"/></g></svg><svg style="left:453px;top:569.6px" width="20" height="20" viewBox="-10 -10 20 20"><g fill="none" stroke="#232629" stroke-width="1.6" stroke-linecap="butt"><circle r="8.5" stroke-width="1.7"/><path d="M0.2,0.1 Q-3.9,-1.9 -5.6,-6.1" transform="rotate(0)"/><path d="M0.2,0.1 Q-3.9,-1.9 -5.6,-6.1" transform="rotate(120)"/><path d="M0.2,0.1 Q-3.9,-1.9 -5.6,-6.1" transform="rotate(240)"/></g></svg><svg style="left:484px;top:570px" width="20" height="20" viewBox="0 0 20 20" ><g fill="none" stroke="#232629" stroke-width="1.2" stroke-linejoin="round"><path d="M1.6,6.2 H5.6 L10.4,2.2 V17.6 L5.6,13.6 H1.6 Z"/><path d="M12.9,7.3 Q14.6,10 12.9,12.7" stroke-width="1.5"/><path d="M15.6,5.2 Q18.6,10 15.6,14.8" stroke="#b9bec4" stroke-width="1.1"/></g></svg><svg style="left:511px;top:568px" width="24" height="24" viewBox="0 0 24 24" ><g fill="none" stroke="#2f3338" stroke-width="1.4" stroke-linecap="round"><path d="M22.1,14.2 A10.3,10.3 0 1 0 13.8,22.1"/><circle cx="12" cy="12" r="3.7" stroke-width="1.3"/><path d="M17.2,21.3 L21.6,17.2" stroke="#8a8f96" stroke-width="2.6"/></g></svg><svg style="left:540px;top:568px" width="26" height="24" viewBox="0 0 26 24" ><g fill="none" stroke="#2f3338" stroke-width="1.3" stroke-linecap="round"><rect x="5.5" y="1.8" width="6.2" height="14.2" rx="3.1"/><path d="M2.5,11.4 V12.4 A6.1,6.1 0 0 0 14.7,12.4 V11.4"/><path d="M8.6,18.6 V22 M5.2,22 H12"/><path d="M19.6,5.2 Q14.6,12 19.6,18.8" stroke-width="1.4"/><path d="M23.2,8.2 Q20.2,12 23.2,15.8" stroke-width="1.4"/></g></svg><span class="tray" style="left:568.2px;top:571.5px;font-size:14.9px;line-height:16px">АНГ</span><svg style="left:603px;top:571px" width="20" height="20" viewBox="0 0 20 20" ><g fill="none" stroke="#232629" stroke-width="1.2"><path d="M13.4,4.2 H2.6 V14.2 H15"/><path d="M5.4,16.8 H15 M7.2,14.2 V16.8 M12.2,14.2 V16.8"/><rect x="13.6" y="2.4" width="3.8" height="5.8" fill="#dfe5ec"/><path d="M15.5,8.2 V17.4"/></g></svg><svg style="left:631px;top:567.8px" width="24" height="24" viewBox="0 0 24 24" ><path d="M17.60,12.00 L20.20,12.00 M15.96,15.96 L17.80,17.80 M12.00,17.60 L12.00,20.20 M8.04,15.96 L6.20,17.80 M6.40,12.00 L3.80,12.00 M8.04,8.04 L6.20,6.20 M12.00,6.40 L12.00,3.80 M15.96,8.04 L17.80,6.20 " stroke="#555a60" stroke-width="1.3" fill="none"/><circle cx="12" cy="12" r="3.4" fill="#fff" stroke="#232629" stroke-width="1"/><path d="M12,8.2 A3.8,3.8 0 0 1 12,15.8 Z" fill="#232629"/></svg><svg style="left:662.4px;top:573.8px" width="18" height="11" viewBox="0 0 18 11" ><path d="M0.8,9 L8.8,1.4 L16.8,9" fill="none" stroke="#232629" stroke-width="1.2"/></svg><span class="tray" style="left:700.6px;top:567px;font-size:12.8px;line-height:15px">10:54</span><span class="tray" style="left:690px;top:579.6px;font-size:10.6px;line-height:13px">13.06.2025</span><svg style="left:756.5px;top:571.2px" width="23" height="18" viewBox="0 0 23 18" ><rect x="1" y="1" width="21" height="15.4" rx="2.6" fill="none" stroke="#3b4046" stroke-width="1.5"/><path d="M3.6,13 H19.4" stroke="#3b4046" stroke-width="1.5"/></svg><svg style="left:528px;top:362px" width="28" height="32" viewBox="0 0 28 32" ><path d="M3.5,4 V27.5 L9.5,21.5 H22.5 Z" fill="#0a0a0a" stroke="#fff" stroke-width="2.6" stroke-linejoin="miter"/></svg></div></div></div><div style="left:354px;top:238.5px;width:1.4px;height:1.4px;background:#8a8e98"></div><div style="left:357px;top:238.5px;width:1.4px;height:1.4px;background:#8a8e98"></div><div style="left:360px;top:238.5px;width:1.4px;height:1.4px;background:#8a8e98"></div><div style="left:363px;top:238.5px;width:1.4px;height:1.4px;background:#8a8e98"></div><div style="left:366px;top:238.5px;width:1.4px;height:1.4px;background:#8a8e98"></div><div style="left:369px;top:238.5px;width:1.4px;height:1.4px;background:#8a8e98"></div><div style="left:698px;top:243px;width:10px;height:223.5px;background:#22252d;border-radius:4px"></div><div style="left:698px;top:243px;width:10px;height:178.5px;background:#373b46;border-radius:4px"></div><span class="lbl" style="top:259.5px;letter-spacing:.25px">Экран</span><div class="inp" style="top:252px;height:30px"></div><span style="left:138px;top:259.5px;letter-spacing:-.11px">Virtual1 (800x600 @ 0,0)</span><div style="left:663.5px;top:253px;width:1px;height:28px;background:#32363f"></div><svg style="left:671px;top:264.3px" width="11" height="6" viewBox="0 0 11 6" ><path d="M0,0 H11 L5.5,6 Z" fill="#fefefe"/></svg><div class="cb" style="top:295px"></div><svg style="left:128px;top:295px" width="14" height="13" viewBox="0 0 14 13" ><path d="M3,6.6 L5.8,9.4 L11.2,3.4" fill="none" stroke="#fefefe" stroke-width="1.4"/></svg><span style="left:149px;top:294.7px;letter-spacing:.19px">Захватывать курсор</span><div class="cb" style="top:324px"></div><span style="left:148.5px;top:323.7px;letter-spacing:.3px">Расширенные настройки</span><span class="lbl" style="top:355.9px">Обрезка сверху</span><div class="inp" style="top:349.9px"></div><span style="left:138px;top:358.7px">0 px</span><div style="left:663.5px;top:350.9px;width:1px;height:29.8px;background:#32363f"></div><div style="left:664.5px;top:365.3px;width:23px;height:1px;background:#32363f"></div><svg style="left:671px;top:355.3px" width="10" height="6" viewBox="0 0 10 6" ><path d="M1.1,4.9 L5,1.2 L8.9,4.9" fill="none" stroke="#fefefe" stroke-width="1.4"/></svg><svg style="left:671px;top:370.8px" width="10" height="6" viewBox="0 0 10 6" ><path d="M1.1,1.1 L5,4.8 L8.9,1.1" fill="none" stroke="#fefefe" stroke-width="1.4"/></svg><span class="lbl" style="top:398.0px">Обрезка слева</span><div class="inp" style="top:392.0px"></div><span style="left:138px;top:400.8px">0 px</span><div style="left:663.5px;top:393.0px;width:1px;height:29.8px;background:#32363f"></div><div style="left:664.5px;top:407.4px;width:23px;height:1px;background:#32363f"></div><svg style="left:671px;top:397.4px" width="10" height="6" viewBox="0 0 10 6" ><path d="M1.1,4.9 L5,1.2 L8.9,4.9" fill="none" stroke="#fefefe" stroke-width="1.4"/></svg><svg style="left:671px;top:412.9px" width="10" height="6" viewBox="0 0 10 6" ><path d="M1.1,1.1 L5,4.8 L8.9,1.1" fill="none" stroke="#fefefe" stroke-width="1.4"/></svg><span class="lbl" style="top:440.1px">Обрезка справа</span><div class="inp" style="top:434.1px"></div><span style="left:138px;top:442.9px">0 px</span><div style="left:663.5px;top:435.1px;width:1px;height:29.8px;background:#32363f"></div><div style="left:664.5px;top:449.5px;width:23px;height:1px;background:#32363f"></div><div style="left:664.5px;top:450.5px;width:23.3px;height:15.4px;background:#343842;border-radius:0 0 4px 0"></div><svg style="left:671px;top:439.5px" width="10" height="6" viewBox="0 0 10 6" ><path d="M1.1,4.9 L5,1.2 L8.9,4.9" fill="none" stroke="#fefefe" stroke-width="1.4"/></svg><svg style="left:671px;top:455.0px" width="10" height="6" viewBox="0 0 10 6" ><path d="M1.1,1.1 L5,4.8 L8.9,1.1" fill="none" stroke="#fefefe" stroke-width="1.4"/></svg><div class="btn" style="left:11px;width:105px"><u>D</u>efaults</div><div class="btn" style="left:535px;width:74px"><u>O</u>K</div><div class="btn" style="left:614px;width:95px"><span style="position:static;letter-spacing:-.45px"><u>C</u>ancel</span></div><div style="left:717.5px;top:508px;width:1.6px;height:1.6px;background:#6f7480"></div><div style="left:714.5px;top:511px;width:1.6px;height:1.6px;background:#6f7480"></div><div style="left:717.5px;top:511px;width:1.6px;height:1.6px;background:#6f7480"></div><div style="left:711.5px;top:514px;width:1.6px;height:1.6px;background:#6f7480"></div><div style="left:714.5px;top:514px;width:1.6px;height:1.6px;background:#6f7480"></div><div style="left:717.5px;top:514px;width:1.6px;height:1.6px;background:#6f7480"></div><div style="left:708.5px;top:517px;width:1.6px;height:1.6px;background:#6f7480"></div><div style="left:711.5px;top:517px;width:1.6px;height:1.6px;background:#6f7480"></div><div style="left:714.5px;top:517px;width:1.6px;height:1.6px;background:#6f7480"></div><div style="left:717.5px;top:517px;width:1.6px;height:1.6px;background:#6f7480"></div></div></div><div class="task"></div><div style="left:197px;top:560px;width:46px;height:40px;background:#afceea"></div><div style="left:194.5px;top:560px;width:2.5px;height:40px;background:#d6e6f2"></div><div style="left:243px;top:560px;width:3px;height:40px;background:#d6e6f2"></div><svg style="left:16px;top:564px" width="32" height="32" viewBox="0 0 32 32" ><defs><linearGradient id="gA" x1="0" y1="0" x2="0" y2="1"><stop offset="0" stop-color="#4c89cf"/><stop offset="1" stop-color="#3c78c0"/></linearGradient></defs><rect x="0" y="0" width="32" height="32" rx="7" fill="url(#gA)"/><circle cx="15.3" cy="16.7" r="6.6" fill="#3a73b8" opacity=".5"/><path d="M23,20.9 A8.7,8.7 0 1 1 14.2,8.3 H24 V18" fill="none" stroke="#dbeeff" stroke-width="1.7" stroke-linejoin="miter"/></svg><svg style="left:60px;top:563.7px" width="32" height="32" viewBox="-16 -16 32 32"><defs><linearGradient id="gG" x1="1" y1="0" x2="0" y2="1"><stop offset="0" stop-color="#3f8ae0"/><stop offset="1" stop-color="#3a68a4"/></linearGradient></defs><circle r="13.2" fill="#3d70a8"/><circle cx="13.60" cy="0.00" r="2.1" fill="#e3eef9"/><circle cx="9.62" cy="9.62" r="2.1" fill="#e3eef9"/><circle cx="0.00" cy="13.60" r="2.1" fill="#e3eef9"/><circle cx="-9.62" cy="9.62" r="2.1" fill="#e3eef9"/><circle cx="-13.60" cy="0.00" r="2.1" fill="#e3eef9"/><circle cx="-9.62" cy="-9.62" r="2.1" fill="#e3eef9"/><circle cx="-0.00" cy="-13.60" r="2.1" fill="#e3eef9"/><circle cx="9.62" cy="-9.62" r="2.1" fill="#e3eef9"/><circle r="7.4" fill="url(#gG)" stroke="#d4ecff" stroke-width="1.5"/></svg><svg style="left:109px;top:567px" width="30" height="26" viewBox="0 0 30 26" ><defs><linearGradient id="gF" x1="0" y1="0" x2="0" y2="1"><stop offset="0" stop-color="#62a1dc"/><stop offset="1" stop-color="#3f80c4"/></linearGradient></defs><path d="M0,1.2 Q0,0 1.2,0 H10.6 L14.4,3.8 H28.6 Q29.7,3.8 29.7,5 V12 H0 Z" fill="#3c72ad"/><rect x="2.7" y="6" width="16" height="3.4" fill="#f4f8fc"/><path d="M0,8.7 H16.2 L18.8,5.3 H29.7 V24.5 Q29.7,25.7 28.5,25.7 H1.2 Q0,25.7 0,24.5 Z" fill="url(#gF)"/></svg><svg style="left:156px;top:563.7px" width="32" height="32" viewBox="-16 -16 32 32"><defs><linearGradient id="gC" x1="0" y1="0" x2="1" y2="1"><stop offset="0" stop-color="#8cc3ea"/><stop offset="1" stop-color="#bfe2f3"/></linearGradient></defs><circle r="13.7" fill="#4f8ed0"/><path d="M-2,1 Q-9,-4 -11.86,-6.85 A13.7,13.7 0 0 1 13.03,-4.23 L5.5,-5 Z" fill="#3777bb"/><path d="M5.5,-5 L13.03,-4.23 A13.7,13.7 0 0 1 1.43,13.62 L2,6 Z" fill="url(#gC)"/><circle r="6.1" fill="#3a72b4" stroke="#dcf0ff" stroke-width="1.5"/></svg><svg style="left:207.50px;top:567.10px" width="25.60" height="25.60" viewBox="-12.5 -12.5 25 25"><circle r="12.5" fill="#2d2828"/><g><path d="M1.3,0.5 Q-3.0,-2.2 -5.0,-7.9 Q-6.8,-2.4 -1.0,1.5 Z" transform="rotate(0)" fill="#ececec"/><path d="M1.3,0.5 Q-3.0,-2.2 -5.0,-7.9 Q-6.8,-2.4 -1.0,1.5 Z" transform="rotate(120)" fill="#ececec"/><path d="M1.3,0.5 Q-3.0,-2.2 -5.0,-7.9 Q-6.8,-2.4 -1.0,1.5 Z" transform="rotate(240)" fill="#ececec"/></g></svg><svg style="left:453px;top:569.6px" width="20" height="20" viewBox="-10 -10 20 20"><g fill="none" stroke="#232629" stroke-width="1.6" stroke-linecap="butt"><circle r="8.5" stroke-width="1.7"/><path d="M0.2,0.1 Q-3.9,-1.9 -5.6,-6.1" transform="rotate(0)"/><path d="M0.2,0.1 Q-3.9,-1.9 -5.6,-6.1" transform="rotate(120)"/><path d="M0.2,0.1 Q-3.9,-1.9 -5.6,-6.1" transform="rotate(240)"/></g></svg><svg style="left:484px;top:570px" width="20" height="20" viewBox="0 0 20 20" ><g fill="none" stroke="#232629" stroke-width="1.2" stroke-linejoin="round"><path d="M1.6,6.2 H5.6 L10.4,2.2 V17.6 L5.6,13.6 H1.6 Z"/><path d="M12.9,7.3 Q14.6,10 12.9,12.7" stroke-width="1.5"/><path d="M15.6,5.2 Q18.6,10 15.6,14.8" stroke="#b9bec4" stroke-width="1.1"/></g></svg><svg style="left:511px;top:568px" width="24" height="24" viewBox="0 0 24 24" ><g fill="none" stroke="#2f3338" stroke-width="1.4" stroke-linecap="round"><path d="M22.1,14.2 A10.3,10.3 0 1 0 13.8,22.1"/><circle cx="12" cy="12" r="3.7" stroke-width="1.3"/><path d="M17.2,21.3 L21.6,17.2" stroke="#8a8f96" stroke-width="2.6"/></g></svg><svg style="left:540px;top:568px" width="26" height="24" viewBox="0 0 26 24" ><g fill="none" stroke="#2f3338" stroke-width="1.3" stroke-linecap="round"><rect x="5.5" y="1.8" width="6.2" height="14.2" rx="3.1"/><path d="M2.5,11.4 V12.4 A6.1,6.1 0 0 0 14.7,12.4 V11.4"/><path d="M8.6,18.6 V22 M5.2,22 H12"/><path d="M19.6,5.2 Q14.6,12 19.6,18.8" stroke-width="1.4"/><path d="M23.2,8.2 Q20.2,12 23.2,15.8" stroke-width="1.4"/></g></svg><span class="tray" style="left:568.2px;top:571.5px;font-size:14.9px;line-height:16px">АНГ</span><svg style="left:603px;top:571px" width="20" height="20" viewBox="0 0 20 20" ><g fill="none" stroke="#232629" stroke-width="1.2"><path d="M13.4,4.2 H2.6 V14.2 H15"/><path d="M5.4,16.8 H15 M7.2,14.2 V16.8 M12.2,14.2 V16.8"/><rect x="13.6" y="2.4" width="3.8" height="5.8" fill="#dfe5ec"/><path d="M15.5,8.2 V17.4"/></g></svg><svg style="left:631px;top:567.8px" width="24" height="24" viewBox="0 0 24 24" ><path d="M17.60,12.00 L20.20,12.00 M15.96,15.96 L17.80,17.80 M12.00,17.60 L12.00,20.20 M8.04,15.96 L6.20,17.80 M6.40,12.00 L3.80,12.00 M8.04,8.04 L6.20,6.20 M12.00,6.40 L12.00,3.80 M15.96,8.04 L17.80,6.20 " stroke="#555a60" stroke-width="1.3" fill="none"/><circle cx="12" cy="12" r="3.4" fill="#fff" stroke="#232629" stroke-width="1"/><path d="M12,8.2 A3.8,3.8 0 0 1 12,15.8 Z" fill="#232629"/></svg><svg style="left:662.4px;top:573.8px" width="18" height="11" viewBox="0 0 18 11" ><path d="M0.8,9 L8.8,1.4 L16.8,9" fill="none" stroke="#232629" stroke-width="1.2"/></svg><span class="tray" style="left:700.6px;top:567px;font-size:12.8px;line-height:15px">10:54</span><span class="tray" style="left:690px;top:579.6px;font-size:10.6px;line-height:13px">13.06.2025</span><svg style="left:756.5px;top:571.2px" width="23" height="18" viewBox="0 0 23 18" ><rect x="1" y="1" width="21" height="15.4" rx="2.6" fill="none" stroke="#3b4046" stroke-width="1.5"/><path d="M3.6,13 H19.4" stroke="#3b4046" stroke-width="1.5"/></svg><svg style="left:528px;top:362px" width="28" height="32" viewBox="0 0 28 32" ><path d="M3.5,4 V27.5 L9.5,21.5 H22.5 Z" fill="#0a0a0a" stroke="#fff" stroke-width="2.6" stroke-linejoin="miter"/></svg></div></div></div><div style="left:354px;top:238.5px;width:1.4px;height:1.4px;background:#8a8e98"></div><div style="left:357px;top:238.5px;width:1.4px;height:1.4px;background:#8a8e98"></div><div style="left:360px;top:238.5px;width:1.4px;height:1.4px;background:#8a8e98"></div><div style="left:363px;top:238.5px;width:1.4px;height:1.4px;background:#8a8e98"></div><div style="left:366px;top:238.5px;width:1.4px;height:1.4px;background:#8a8e98"></div><div style="left:369px;top:238.5px;width:1.4px;height:1.4px;background:#8a8e98"></div><div style="left:698px;top:243px;width:10px;height:223.5px;background:#22252d;border-radius:4px"></div><div style="left:698px;top:243px;width:10px;height:178.5px;background:#373b46;border-radius:4px"></div><span class="lbl" style="top:259.5px;letter-spacing:.25px">Экран</span><div class="inp" style="top:252px;height:30px"></div><span style="left:138px;top:259.5px;letter-spacing:-.11px">Virtual1 (800x600 @ 0,0)</span><div style="left:663.5px;top:253px;width:1px;height:28px;background:#32363f"></div><svg style="left:671px;top:264.3px" width="11" height="6" viewBox="0 0 11 6" ><path d="M0,0 H11 L5.5,6 Z" fill="#fefefe"/></svg><div class="cb" style="top:295px"></div><svg style="left:128px;top:295px" width="14" height="13" viewBox="0 0 14 13" ><path d="M3,6.6 L5.8,9.4 L11.2,3.4" fill="none" stroke="#fefefe" stroke-width="1.4"/></svg><span style="left:149px;top:294.7px;letter-spacing:.19px">Захватывать курсор</span><div class="cb" style="top:324px"></div><span style="left:148.5px;top:323.7px;letter-spacing:.3px">Расширенные настройки</span><span class="lbl" style="top:355.9px">Обрезка сверху</span><div class="inp" style="top:349.9px"></div><span style="left:138px;top:358.7px">0 px</span><div style="left:663.5px;top:350.9px;width:1px;height:29.8px;background:#32363f"></div><div style="left:664.5px;top:365.3px;width:23px;height:1px;background:#32363f"></div><svg style="left:671px;top:355.3px" width="10" height="6" viewBox="0 0 10 6" ><path d="M1.1,4.9 L5,1.2 L8.9,4.9" fill="none" stroke="#fefefe" stroke-width="1.4"/></svg><svg style="left:671px;top:370.8px" width="10" height="6" viewBox="0 0 10 6" ><path d="M1.1,1.1 L5,4.8 L8.9,1.1" fill="none" stroke="#fefefe" stroke-width="1.4"/></svg><span class="lbl" style="top:398.0px">Обрезка слева</span><div class="inp" style="top:392.0px"></div><span style="left:138px;top:400.8px">0 px</span><div style="left:663.5px;top:393.0px;width:1px;height:29.8px;background:#32363f"></div><div style="left:664.5px;top:407.4px;width:23px;height:1px;background:#32363f"></div><svg style="left:671px;top:397.4px" width="10" height="6" viewBox="0 0 10 6" ><path d="M1.1,4.9 L5,1.2 L8.9,4.9" fill="none" stroke="#fefefe" stroke-width="1.4"/></svg><svg style="left:671px;top:412.9px" width="10" height="6" viewBox="0 0 10 6" ><path d="M1.1,1.1 L5,4.8 L8.9,1.1" fill="none" stroke="#fefefe" stroke-width="1.4"/></svg><span class="lbl" style="top:440.1px">Обрезка справа</span><div class="inp" style="top:434.1px"></div><span style="left:138px;top:442.9px">0 px</span><div style="left:663.5px;top:435.1px;width:1px;height:29.8px;background:#32363f"></div><div style="left:664.5px;top:449.5px;width:23px;height:1px;background:#32363f"></div><div style="left:664.5px;top:450.5px;width:23.3px;height:15.4px;background:#343842;border-radius:0 0 4px 0"></div><svg style="left:671px;top:439.5px" width="10" height="6" viewBox="0 0 10 6" ><path d="M1.1,4.9 L5,1.2 L8.9,4.9" fill="none" stroke="#fefefe" stroke-width="1.4"/></svg><svg style="left:671px;top:455.0px" width="10" height="6" viewBox="0 0 10 6" ><path d="M1.1,1.1 L5,4.8 L8.9,1.1" fill="none" stroke="#fefefe" stroke-width="1.4"/></svg><div class="btn" style="left:11px;width:105px"><u>D</u>efaults</div><div class="btn" style="left:535px;width:74px"><u>O</u>K</div><div class="btn" style="left:614px;width:95px"><span style="position:static;letter-spacing:-.45px"><u>C</u>ancel</span></div><div style="left:717.5px;top:508px;width:1.6px;height:1.6px;background:#6f7480"></div><div style="left:714.5px;top:511px;width:1.6px;height:1.6px;background:#6f7480"></div><div style="left:717.5px;top:511px;width:1.6px;height:1.6px;background:#6f7480"></div><div style="left:711.5px;top:514px;width:1.6px;height:1.6px;background:#6f7480"></div><div style="left:714.5px;top:514px;width:1.6px;height:1.6px;background:#6f7480"></div><div style="left:717.5px;top:514px;width:1.6px;height:1.6px;background:#6f7480"></div><div style="left:708.5px;top:517px;width:1.6px;height:1.6px;background:#6f7480"></div><div style="left:711.5px;top:517px;width:1.6px;height:1.6px;background:#6f7480"></div><div style="left:714.5px;top:517px;width:1.6px;height:1.6px;background:#6f7480"></div><div style="left:717.5px;top:517px;width:1.6px;height:1.6px;background:#6f7480"></div></div></div><div class="task"></div><div style="left:197px;top:560px;width:46px;height:40px;background:#afceea"></div><div style="left:194.5px;top:560px;width:2.5px;height:40px;background:#d6e6f2"></div><div style="left:243px;top:560px;width:3px;height:40px;background:#d6e6f2"></div><svg style="left:16px;top:564px" width="32" height="32" viewBox="0 0 32 32" ><defs><linearGradient id="gA" x1="0" y1="0" x2="0" y2="1"><stop offset="0" stop-color="#4c89cf"/><stop offset="1" stop-color="#3c78c0"/></linearGradient></defs><rect x="0" y="0" width="32" height="32" rx="7" fill="url(#gA)"/><circle cx="15.3" cy="16.7" r="6.6" fill="#3a73b8" opacity=".5"/><path d="M23,20.9 A8.7,8.7 0 1 1 14.2,8.3 H24 V18" fill="none" stroke="#dbeeff" stroke-width="1.7" stroke-linejoin="miter"/></svg><svg style="left:60px;top:563.7px" width="32" height="32" viewBox="-16 -16 32 32"><defs><linearGradient id="gG" x1="1" y1="0" x2="0" y2="1"><stop offset="0" stop-color="#3f8ae0"/><stop offset="1" stop-color="#3a68a4"/></linearGradient></defs><circle r="13.2" fill="#3d70a8"/><circle cx="13.60" cy="0.00" r="2.1" fill="#e3eef9"/><circle cx="9.62" cy="9.62" r="2.1" fill="#e3eef9"/><circle cx="0.00" cy="13.60" r="2.1" fill="#e3eef9"/><circle cx="-9.62" cy="9.62" r="2.1" fill="#e3eef9"/><circle cx="-13.60" cy="0.00" r="2.1" fill="#e3eef9"/><circle cx="-9.62" cy="-9.62" r="2.1" fill="#e3eef9"/><circle cx="-0.00" cy="-13.60" r="2.1" fill="#e3eef9"/><circle cx="9.62" cy="-9.62" r="2.1" fill="#e3eef9"/><circle r="7.4" fill="url(#gG)" stroke="#d4ecff" stroke-width="1.5"/></svg><svg style="left:109px;top:567px" width="30" height="26" viewBox="0 0 30 26" ><defs><linearGradient id="gF" x1="0" y1="0" x2="0" y2="1"><stop offset="0" stop-color="#62a1dc"/><stop offset="1" stop-color="#3f80c4"/></linearGradient></defs><path d="M0,1.2 Q0,0 1.2,0 H10.6 L14.4,3.8 H28.6 Q29.7,3.8 29.7,5 V12 H0 Z" fill="#3c72ad"/><rect x="2.7" y="6" width="16" height="3.4" fill="#f4f8fc"/><path d="M0,8.7 H16.2 L18.8,5.3 H29.7 V24.5 Q29.7,25.7 28.5,25.7 H1.2 Q0,25.7 0,24.5 Z" fill="url(#gF)"/></svg><svg style="left:156px;top:563.7px" width="32" height="32" viewBox="-16 -16 32 32"><defs><linearGradient id="gC" x1="0" y1="0" x2="1" y2="1"><stop offset="0" stop-color="#8cc3ea"/><stop offset="1" stop-color="#bfe2f3"/></linearGradient></defs><circle r="13.7" fill="#4f8ed0"/><path d="M-2,1 Q-9,-4 -11.86,-6.85 A13.7,13.7 0 0 1 13.03,-4.23 L5.5,-5 Z" fill="#3777bb"/><path d="M5.5,-5 L13.03,-4.23 A13.7,13.7 0 0 1 1.43,13.62 L2,6 Z" fill="url(#gC)"/><circle r="6.1" fill="#3a72b4" stroke="#dcf0ff" stroke-width="1.5"/></svg><svg style="left:207.50px;top:567.10px" width="25.60" height="25.60" viewBox="-12.5 -12.5 25 25"><circle r="12.5" fill="#2d2828"/><g><path d="M1.3,0.5 Q-3.0,-2.2 -5.0,-7.9 Q-6.8,-2.4 -1.0,1.5 Z" transform="rotate(0)" fill="#ececec"/><path d="M1.3,0.5 Q-3.0,-2.2 -5.0,-7.9 Q-6.8,-2.4 -1.0,1.5 Z" transform="rotate(120)" fill="#ececec"/><path d="M1.3,0.5 Q-3.0,-2.2 -5.0,-7.9 Q-6.8,-2.4 -1.0,1.5 Z" transform="rotate(240)" fill="#ececec"/></g></svg><svg style="left:453px;top:569.6px" width="20" height="20" viewBox="-10 -10 20 20"><g fill="none" stroke="#232629" stroke-width="1.6" stroke-linecap="butt"><circle r="8.5" stroke-width="1.7"/><path d="M0.2,0.1 Q-3.9,-1.9 -5.6,-6.1" transform="rotate(0)"/><path d="M0.2,0.1 Q-3.9,-1.9 -5.6,-6.1" transform="rotate(120)"/><path d="M0.2,0.1 Q-3.9,-1.9 -5.6,-6.1" transform="rotate(240)"/></g></svg><svg style="left:484px;top:570px" width="20" height="20" viewBox="0 0 20 20" ><g fill="none" stroke="#232629" stroke-width="1.2" stroke-linejoin="round"><path d="M1.6,6.2 H5.6 L10.4,2.2 V17.6 L5.6,13.6 H1.6 Z"/><path d="M12.9,7.3 Q14.6,10 12.9,12.7" stroke-width="1.5"/><path d="M15.6,5.2 Q18.6,10 15.6,14.8" stroke="#b9bec4" stroke-width="1.1"/></g></svg><svg style="left:511px;top:568px" width="24" height="24" viewBox="0 0 24 24" ><g fill="none" stroke="#2f3338" stroke-width="1.4" stroke-linecap="round"><path d="M22.1,14.2 A10.3,10.3 0 1 0 13.8,22.1"/><circle cx="12" cy="12" r="3.7" stroke-width="1.3"/><path d="M17.2,21.3 L21.6,17.2" stroke="#8a8f96" stroke-width="2.6"/></g></svg><svg style="left:540px;top:568px" width="26" height="24" viewBox="0 0 26 24" ><g fill="none" stroke="#2f3338" stroke-width="1.3" stroke-linecap="round"><rect x="5.5" y="1.8" width="6.2" height="14.2" rx="3.1"/><path d="M2.5,11.4 V12.4 A6.1,6.1 0 0 0 14.7,12.4 V11.4"/><path d="M8.6,18.6 V22 M5.2,22 H12"/><path d="M19.6,5.2 Q14.6,12 19.6,18.8" stroke-width="1.4"/><path d="M23.2,8.2 Q20.2,12 23.2,15.8" stroke-width="1.4"/></g></svg><span class="tray" style="left:568.2px;top:571.5px;font-size:14.9px;line-height:16px">АНГ</span><svg style="left:603px;top:571px" width="20" height="20" viewBox="0 0 20 20" ><g fill="none" stroke="#232629" stroke-width="1.2"><path d="M13.4,4.2 H2.6 V14.2 H15"/><path d="M5.4,16.8 H15 M7.2,14.2 V16.8 M12.2,14.2 V16.8"/><rect x="13.6" y="2.4" width="3.8" height="5.8" fill="#dfe5ec"/><path d="M15.5,8.2 V17.4"/></g></svg><svg style="left:631px;top:567.8px" width="24" height="24" viewBox="0 0 24 24" ><path d="M17.60,12.00 L20.20,12.00 M15.96,15.96 L17.80,17.80 M12.00,17.60 L12.00,20.20 M8.04,15.96 L6.20,17.80 M6.40,12.00 L3.80,12.00 M8.04,8.04 L6.20,6.20 M12.00,6.40 L12.00,3.80 M15.96,8.04 L17.80,6.20 " stroke="#555a60" stroke-width="1.3" fill="none"/><circle cx="12" cy="12" r="3.4" fill="#fff" stroke="#232629" stroke-width="1"/><path d="M12,8.2 A3.8,3.8 0 0 1 12,15.8 Z" fill="#232629"/></svg><svg style="left:662.4px;top:573.8px" width="18" height="11" viewBox="0 0 18 11" ><path d="M0.8,9 L8.8,1.4 L16.8,9" fill="none" stroke="#232629" stroke-width="1.2"/></svg><span class="tray" style="left:700.6px;top:567px;font-size:12.8px;line-height:15px">10:54</span><span class="tray" style="left:690px;top:579.6px;font-size:10.6px;line-height:13px">13.06.2025</span><svg style="left:756.5px;top:571.2px" width="23" height="18" viewBox="0 0 23 18" ><rect x="1" y="1" width="21" height="15.4" rx="2.6" fill="none" stroke="#3b4046" stroke-width="1.5"/><path d="M3.6,13 H19.4" stroke="#3b4046" stroke-width="1.5"/></svg><svg style="left:528px;top:362px" width="28" height="32" viewBox="0 0 28 32" ><path d="M3.5,4 V27.5 L9.5,21.5 H22.5 Z" fill="#0a0a0a" stroke="#fff" stroke-width="2.6" stroke-linejoin="miter"/></svg></div></div></div><div style="left:354px;top:238.5px;width:1.4px;height:1.4px;background:#8a8e98"></div><div style="left:357px;top:238.5px;width:1.4px;height:1.4px;background:#8a8e98"></div><div style="left:360px;top:238.5px;width:1.4px;height:1.4px;background:#8a8e98"></div><div style="left:363px;top:238.5px;width:1.4px;height:1.4px;background:#8a8e98"></div><div style="left:366px;top:238.5px;width:1.4px;height:1.4px;background:#8a8e98"></div><div style="left:369px;top:238.5px;width:1.4px;height:1.4px;background:#8a8e98"></div><div style="left:698px;top:243px;width:10px;height:223.5px;background:#22252d;border-radius:4px"></div><div style="left:698px;top:243px;width:10px;height:178.5px;background:#373b46;border-radius:4px"></div><span class="lbl" style="top:259.5px;letter-spacing:.25px">Экран</span><div class="inp" style="top:252px;height:30px"></div><span style="left:138px;top:259.5px;letter-spacing:-.11px">Virtual1 (800x600 @ 0,0)</span><div style="left:663.5px;top:253px;width:1px;height:28px;background:#32363f"></div><svg style="left:671px;top:264.3px" width="11" height="6" viewBox="0 0 11 6" ><path d="M0,0 H11 L5.5,6 Z" fill="#fefefe"/></svg><div class="cb" style="top:295px"></div><svg style="left:128px;top:295px" width="14" height="13" viewBox="0 0 14 13" ><path d="M3,6.6 L5.8,9.4 L11.2,3.4" fill="none" stroke="#fefefe" stroke-width="1.4"/></svg><span style="left:149px;top:294.7px;letter-spacing:.19px">Захватывать курсор</span><div class="cb" style="top:324px"></div><span style="left:148.5px;top:323.7px;letter-spacing:.3px">Расширенные настройки</span><span class="lbl" style="top:355.9px">Обрезка сверху</span><div class="inp" style="top:349.9px"></div><span style="left:138px;top:358.7px">0 px</span><div style="left:663.5px;top:350.9px;width:1px;height:29.8px;background:#32363f"></div><div style="left:664.5px;top:365.3px;width:23px;height:1px;background:#32363f"></div><svg style="left:671px;top:355.3px" width="10" height="6" viewBox="0 0 10 6" ><path d="M1.1,4.9 L5,1.2 L8.9,4.9" fill="none" stroke="#fefefe" stroke-width="1.4"/></svg><svg style="left:671px;top:370.8px" width="10" height="6" viewBox="0 0 10 6" ><path d="M1.1,1.1 L5,4.8 L8.9,1.1" fill="none" stroke="#fefefe" stroke-width="1.4"/></svg><span class="lbl" style="top:398.0px">Обрезка слева</span><div class="inp" style="top:392.0px"></div><span style="left:138px;top:400.8px">0 px</span><div style="left:663.5px;top:393.0px;width:1px;height:29.8px;background:#32363f"></div><div style="left:664.5px;top:407.4px;width:23px;height:1px;background:#32363f"></div><svg style="left:671px;top:397.4px" width="10" height="6" viewBox="0 0 10 6" ><path d="M1.1,4.9 L5,1.2 L8.9,4.9" fill="none" stroke="#fefefe" stroke-width="1.4"/></svg><svg style="left:671px;top:412.9px" width="10" height="6" viewBox="0 0 10 6" ><path d="M1.1,1.1 L5,4.8 L8.9,1.1" fill="none" stroke="#fefefe" stroke-width="1.4"/></svg><span class="lbl" style="top:440.1px">Обрезка справа</span><div class="inp" style="top:434.1px"></div><span style="left:138px;top:442.9px">0 px</span><div style="left:663.5px;top:435.1px;width:1px;height:29.8px;background:#32363f"></div><div style="left:664.5px;top:449.5px;width:23px;height:1px;background:#32363f"></div><div style="left:664.5px;top:450.5px;width:23.3px;height:15.4px;background:#343842;border-radius:0 0 4px 0"></div><svg style="left:671px;top:439.5px" width="10" height="6" viewBox="0 0 10 6" ><path d="M1.1,4.9 L5,1.2 L8.9,4.9" fill="none" stroke="#fefefe" stroke-width="1.4"/></svg><svg style="left:671px;top:455.0px" width="10" height="6" viewBox="0 0 10 6" ><path d="M1.1,1.1 L5,4.8 L8.9,1.1" fill="none" stroke="#fefefe" stroke-width="1.4"/></svg><div class="btn" style="left:11px;width:105px"><u>D</u>efaults</div><div class="btn" style="left:535px;width:74px"><u>O</u>K</div><div class="btn" style="left:614px;width:95px"><span style="position:static;letter-spacing:-.45px"><u>C</u>ancel</span></div><div style="left:717.5px;top:508px;width:1.6px;height:1.6px;background:#6f7480"></div><div style="left:714.5px;top:511px;width:1.6px;height:1.6px;background:#6f7480"></div><div style="left:717.5px;top:511px;width:1.6px;height:1.6px;background:#6f7480"></div><div style="left:711.5px;top:514px;width:1.6px;height:1.6px;background:#6f7480"></div><div style="left:714.5px;top:514px;width:1.6px;height:1.6px;background:#6f7480"></div><div style="left:717.5px;top:514px;width:1.6px;height:1.6px;background:#6f7480"></div><div style="left:708.5px;top:517px;width:1.6px;height:1.6px;background:#6f7480"></div><div style="left:711.5px;top:517px;width:1.6px;height:1.6px;background:#6f7480"></div><div style="left:714.5px;top:517px;width:1.6px;height:1.6px;background:#6f7480"></div><div style="left:717.5px;top:517px;width:1.6px;height:1.6px;background:#6f7480"></div></div></div><div class="task"></div><div style="left:197px;top:560px;width:46px;height:40px;background:#afceea"></div><div style="left:194.5px;top:560px;width:2.5px;height:40px;background:#d6e6f2"></div><div style="left:243px;top:560px;width:3px;height:40px;background:#d6e6f2"></div><svg style="left:16px;top:564px" width="32" height="32" viewBox="0 0 32 32" ><defs><linearGradient id="gA" x1="0" y1="0" x2="0" y2="1"><stop offset="0" stop-color="#4c89cf"/><stop offset="1" stop-color="#3c78c0"/></linearGradient></defs><rect x="0" y="0" width="32" height="32" rx="7" fill="url(#gA)"/><circle cx="15.3" cy="16.7" r="6.6" fill="#3a73b8" opacity=".5"/><path d="M23,20.9 A8.7,8.7 0 1 1 14.2,8.3 H24 V18" fill="none" stroke="#dbeeff" stroke-width="1.7" stroke-linejoin="miter"/></svg><svg style="left:60px;top:563.7px" width="32" height="32" viewBox="-16 -16 32 32"><defs><linearGradient id="gG" x1="1" y1="0" x2="0" y2="1"><stop offset="0" stop-color="#3f8ae0"/><stop offset="1" stop-color="#3a68a4"/></linearGradient></defs><circle r="13.2" fill="#3d70a8"/><circle cx="13.60" cy="0.00" r="2.1" fill="#e3eef9"/><circle cx="9.62" cy="9.62" r="2.1" fill="#e3eef9"/><circle cx="0.00" cy="13.60" r="2.1" fill="#e3eef9"/><circle cx="-9.62" cy="9.62" r="2.1" fill="#e3eef9"/><circle cx="-13.60" cy="0.00" r="2.1" fill="#e3eef9"/><circle cx="-9.62" cy="-9.62" r="2.1" fill="#e3eef9"/><circle cx="-0.00" cy="-13.60" r="2.1" fill="#e3eef9"/><circle cx="9.62" cy="-9.62" r="2.1" fill="#e3eef9"/><circle r="7.4" fill="url(#gG)" stroke="#d4ecff" stroke-width="1.5"/></svg><svg style="left:109px;top:567px" width="30" height="26" viewBox="0 0 30 26" ><defs><linearGradient id="gF" x1="0" y1="0" x2="0" y2="1"><stop offset="0" stop-color="#62a1dc"/><stop offset="1" stop-color="#3f80c4"/></linearGradient></defs><path d="M0,1.2 Q0,0 1.2,0 H10.6 L14.4,3.8 H28.6 Q29.7,3.8 29.7,5 V12 H0 Z" fill="#3c72ad"/><rect x="2.7" y="6" width="16" height="3.4" fill="#f4f8fc"/><path d="M0,8.7 H16.2 L18.8,5.3 H29.7 V24.5 Q29.7,25.7 28.5,25.7 H1.2 Q0,25.7 0,24.5 Z" fill="url(#gF)"/></svg><svg style="left:156px;top:563.7px" width="32" height="32" viewBox="-16 -16 32 32"><defs><linearGradient id="gC" x1="0" y1="0" x2="1" y2="1"><stop offset="0" stop-color="#8cc3ea"/><stop offset="1" stop-color="#bfe2f3"/></linearGradient></defs><circle r="13.7" fill="#4f8ed0"/><path d="M-2,1 Q-9,-4 -11.86,-6.85 A13.7,13.7 0 0 1 13.03,-4.23 L5.5,-5 Z" fill="#3777bb"/><path d="M5.5,-5 L13.03,-4.23 A13.7,13.7 0 0 1 1.43,13.62 L2,6 Z" fill="url(#gC)"/><circle r="6.1" fill="#3a72b4" stroke="#dcf0ff" stroke-width="1.5"/></svg><svg style="left:207.50px;top:567.10px" width="25.60" height="25.60" viewBox="-12.5 -12.5 25 25"><circle r="12.5" fill="#2d2828"/><g><path d="M1.3,0.5 Q-3.0,-2.2 -5.0,-7.9 Q-6.8,-2.4 -1.0,1.5 Z" transform="rotate(0)" fill="#ececec"/><path d="M1.3,0.5 Q-3.0,-2.2 -5.0,-7.9 Q-6.8,-2.4 -1.0,1.5 Z" transform="rotate(120)" fill="#ececec"/><path d="M1.3,0.5 Q-3.0,-2.2 -5.0,-7.9 Q-6.8,-2.4 -1.0,1.5 Z" transform="rotate(240)" fill="#ececec"/></g></svg><svg style="left:453px;top:569.6px" width="20" height="20" viewBox="-10 -10 20 20"><g fill="none" stroke="#232629" stroke-width="1.6" stroke-linecap="butt"><circle r="8.5" stroke-width="1.7"/><path d="M0.2,0.1 Q-3.9,-1.9 -5.6,-6.1" transform="rotate(0)"/><path d="M0.2,0.1 Q-3.9,-1.9 -5.6,-6.1" transform="rotate(120)"/><path d="M0.2,0.1 Q-3.9,-1.9 -5.6,-6.1" transform="rotate(240)"/></g></svg><svg style="left:484px;top:570px" width="20" height="20" viewBox="0 0 20 20" ><g fill="none" stroke="#232629" stroke-width="1.2" stroke-linejoin="round"><path d="M1.6,6.2 H5.6 L10.4,2.2 V17.6 L5.6,13.6 H1.6 Z"/><path d="M12.9,7.3 Q14.6,10 12.9,12.7" stroke-width="1.5"/><path d="M15.6,5.2 Q18.6,10 15.6,14.8" stroke="#b9bec4" stroke-width="1.1"/></g></svg><svg style="left:511px;top:568px" width="24" height="24" viewBox="0 0 24 24" ><g fill="none" stroke="#2f3338" stroke-width="1.4" stroke-linecap="round"><path d="M22.1,14.2 A10.3,10.3 0 1 0 13.8,22.1"/><circle cx="12" cy="12" r="3.7" stroke-width="1.3"/><path d="M17.2,21.3 L21.6,17.2" stroke="#8a8f96" stroke-width="2.6"/></g></svg><svg style="left:540px;top:568px" width="26" height="24" viewBox="0 0 26 24" ><g fill="none" stroke="#2f3338" stroke-width="1.3" stroke-linecap="round"><rect x="5.5" y="1.8" width="6.2" height="14.2" rx="3.1"/><path d="M2.5,11.4 V12.4 A6.1,6.1 0 0 0 14.7,12.4 V11.4"/><path d="M8.6,18.6 V22 M5.2,22 H12"/><path d="M19.6,5.2 Q14.6,12 19.6,18.8" stroke-width="1.4"/><path d="M23.2,8.2 Q20.2,12 23.2,15.8" stroke-width="1.4"/></g></svg><span class="tray" style="left:568.2px;top:571.5px;font-size:14.9px;line-height:16px">АНГ</span><svg style="left:603px;top:571px" width="20" height="20" viewBox="0 0 20 20" ><g fill="none" stroke="#232629" stroke-width="1.2"><path d="M13.4,4.2 H2.6 V14.2 H15"/><path d="M5.4,16.8 H15 M7.2,14.2 V16.8 M12.2,14.2 V16.8"/><rect x="13.6" y="2.4" width="3.8" height="5.8" fill="#dfe5ec"/><path d="M15.5,8.2 V17.4"/></g></svg><svg style="left:631px;top:567.8px" width="24" height="24" viewBox="0 0 24 24" ><path d="M17.60,12.00 L20.20,12.00 M15.96,15.96 L17.80,17.80 M12.00,17.60 L12.00,20.20 M8.04,15.96 L6.20,17.80 M6.40,12.00 L3.80,12.00 M8.04,8.04 L6.20,6.20 M12.00,6.40 L12.00,3.80 M15.96,8.04 L17.80,6.20 " stroke="#555a60" stroke-width="1.3" fill="none"/><circle cx="12" cy="12" r="3.4" fill="#fff" stroke="#232629" stroke-width="1"/><path d="M12,8.2 A3.8,3.8 0 0 1 12,15.8 Z" fill="#232629"/></svg><svg style="left:662.4px;top:573.8px" width="18" height="11" viewBox="0 0 18 11" ><path d="M0.8,9 L8.8,1.4 L16.8,9" fill="none" stroke="#232629" stroke-width="1.2"/></svg><span class="tray" style="left:700.6px;top:567px;font-size:12.8px;line-height:15px">10:54</span><span class="tray" style="left:690px;top:579.6px;font-size:10.6px;line-height:13px">13.06.2025</span><svg style="left:756.5px;top:571.2px" width="23" height="18" viewBox="0 0 23 18" ><rect x="1" y="1" width="21" height="15.4" rx="2.6" fill="none" stroke="#3b4046" stroke-width="1.5"/><path d="M3.6,13 H19.4" stroke="#3b4046" stroke-width="1.5"/></svg></div></body></html>
